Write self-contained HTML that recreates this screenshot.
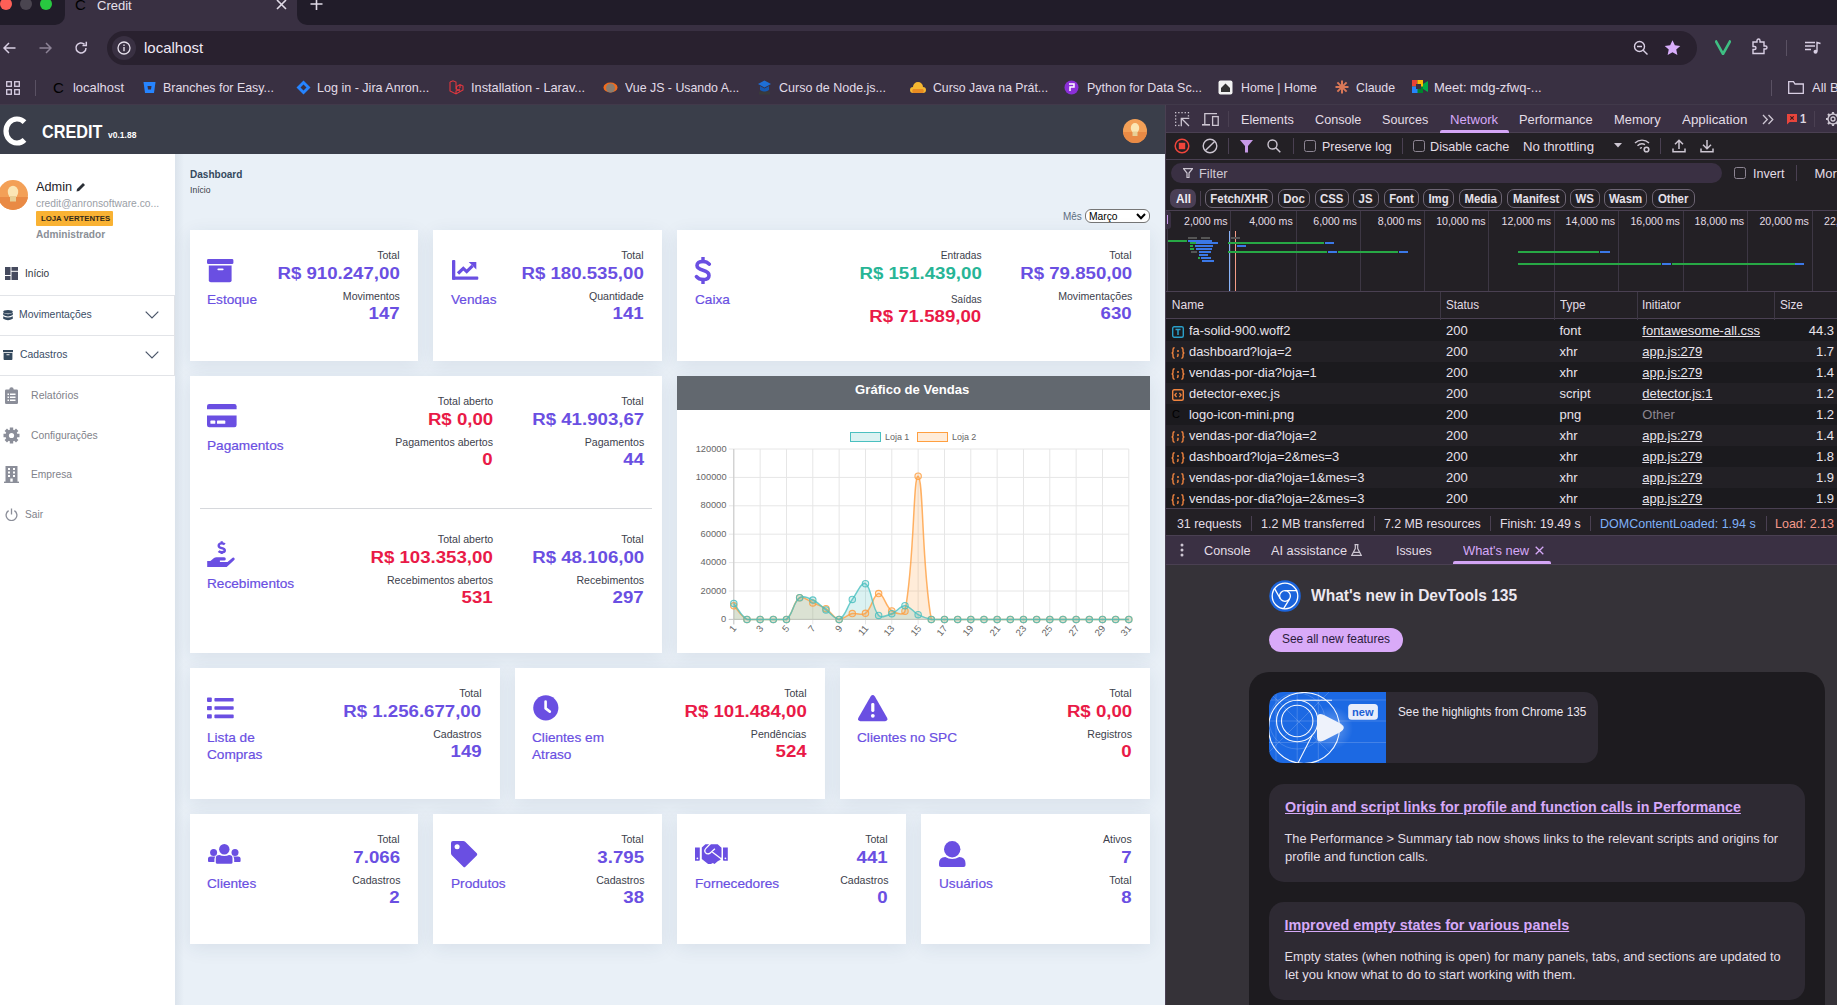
<!DOCTYPE html>
<html><head><meta charset="utf-8">
<style>
*{box-sizing:border-box;margin:0;padding:0}
html,body{width:1837px;height:1005px;overflow:hidden;background:#e9f0f7;font-family:"Liberation Sans",sans-serif}
.a{position:absolute}
.t{position:absolute;white-space:nowrap;line-height:1}
.r{text-align:right}
.card{position:absolute;background:#fff;box-shadow:0 4px 18px rgba(40,60,90,0.085)}
</style></head><body>
<div class="a" style="left:0;top:25px;width:1837px;height:80px;background:#393042"></div>
<!-- tab strip -->
<div class="a" style="left:0;top:0;width:1837px;height:25px;background:#211c29"></div>
<div class="a" style="left:54px;top:0;width:254px;height:25px;background:#393042"></div>
<div class="a" style="left:-20px;top:-20px;width:85px;height:45px;background:#211c29;border-bottom-right-radius:10px"></div>
<div class="a" style="left:297px;top:-20px;width:1600px;height:45px;background:#211c29;border-bottom-left-radius:10px"></div>
<div class="a" style="left:0;top:-2px;width:12px;height:12px;border-radius:50%;background:#fe5f57"></div>
<div class="a" style="left:20px;top:-2px;width:12px;height:12px;border-radius:50%;background:#4a4550"></div>
<div class="a" style="left:40px;top:-2px;width:12px;height:12px;border-radius:50%;background:#28c840"></div>
<div class="t" style="left:75px;top:-3px;font-size:15px;color:#000;font-weight:normal">C</div>
<div class="t" style="left:97px;top:-1px;font-size:13px;color:#e6e0ec">Credit</div>
<svg class="a" style="left:276px;top:0" width="11" height="10" viewBox="0 0 11 10"><path d="M1 0L10 9M10 0L1 9" stroke="#e0dae6" stroke-width="1.6"/></svg>
<svg class="a" style="left:310px;top:-2px" width="13" height="13" viewBox="0 0 13 13"><path d="M6.5 0V12M0.5 6H12.5" stroke="#e0dae6" stroke-width="1.6"/></svg>
<!-- toolbar -->
<svg class="a" style="left:3px;top:42px" width="13" height="12" viewBox="0 0 13 12"><path d="M6 1L1 6L6 11M1 6H12.5" stroke="#d9cfe4" stroke-width="1.5" fill="none"/></svg>
<svg class="a" style="left:39px;top:42px" width="13" height="12" viewBox="0 0 13 12"><path d="M7 1L12 6L7 11M12 6H0.5" stroke="#8d8396" stroke-width="1.5" fill="none"/></svg>
<svg class="a" style="left:74px;top:41px" width="14" height="14" viewBox="0 0 14 14"><path d="M12 7A5 5 0 1 1 10.5 3.4" stroke="#d9cfe4" stroke-width="1.5" fill="none"/><path d="M12.3 0.8V4.6H8.5" stroke="#d9cfe4" stroke-width="1.5" fill="none"/></svg>
<div class="a" style="left:107px;top:31px;width:1590px;height:34px;border-radius:17px;background:#29212f"></div>
<div class="a" style="left:112px;top:36px;width:24px;height:24px;border-radius:12px;background:#393042"></div>
<svg class="a" style="left:117px;top:41px" width="14" height="14" viewBox="0 0 14 14"><circle cx="7" cy="7" r="6" stroke="#e6e0ec" stroke-width="1.3" fill="none"/><rect x="6.3" y="6" width="1.4" height="4.2" fill="#e6e0ec"/><rect x="6.3" y="3.5" width="1.4" height="1.4" fill="#e6e0ec"/></svg>
<div class="t" style="left:144px;top:40px;font-size:15px;color:#efe9f5">localhost</div>
<svg class="a" style="left:1633px;top:40px" width="16" height="16" viewBox="0 0 16 16"><circle cx="6.5" cy="6.5" r="5" stroke="#d9cfe4" stroke-width="1.4" fill="none"/><path d="M4 6.5H9M10.2 10.2L14.5 14.5" stroke="#d9cfe4" stroke-width="1.4"/></svg>
<svg class="a" style="left:1664px;top:40px" width="17" height="16" viewBox="0 0 24 23"><path d="M12 0.5L15.4 7.6L23.2 8.5L17.4 13.8L19 21.5L12 17.6L5 21.5L6.6 13.8L0.8 8.5L8.6 7.6Z" fill="#d9aefc"/></svg>
<svg class="a" style="left:1715px;top:40px" width="16" height="15" viewBox="0 0 16 15"><path d="M0.5 0.5L8 14L15.5 0.5" stroke="#3fbf83" stroke-width="2.6" fill="none"/></svg>
<svg class="a" style="left:1751px;top:38px" width="18" height="18" viewBox="0 0 18 18"><path d="M2 4H6V2.5A1.5 1.5 0 0 1 9 2.5V4H13V8H14.5A1.5 1.5 0 0 1 14.5 11H13V15.5H2V11.5H3.5A1.5 1.5 0 0 0 3.5 8.5H2Z" stroke="#d9cfe4" stroke-width="1.4" fill="none"/></svg>
<div class="a" style="left:1786px;top:40px;width:1px;height:16px;background:#5a5163"></div>
<svg class="a" style="left:1805px;top:41px" width="16" height="14" viewBox="0 0 16 14"><path d="M0 1.5H10M0 5H10M0 8.5H6" stroke="#d9cfe4" stroke-width="1.4"/><path d="M12 10.5V1.5L15.5 2.5" stroke="#d9cfe4" stroke-width="1.4" fill="none"/><circle cx="10.5" cy="10.8" r="2" fill="#d9cfe4"/></svg>
<!-- bookmarks -->
<svg class="a" style="left:6px;top:81px" width="14" height="14" viewBox="0 0 14 14"><g fill="none" stroke="#d9cfe4" stroke-width="1.3"><rect x="0.7" y="0.7" width="4.6" height="4.6"/><rect x="8.7" y="0.7" width="4.6" height="4.6"/><rect x="0.7" y="8.7" width="4.6" height="4.6"/><rect x="8.7" y="8.7" width="4.6" height="4.6"/></g></svg>
<div class="a" style="left:35px;top:80px;width:1px;height:16px;background:#5a5163"></div>
<div class="t" style="left:53px;top:80px;font-size:15px;color:#000">C</div>
<div class="t" style="left:73px;top:81px;font-size:13px;color:#e2dce8;transform:scaleX(0.994);transform-origin:left center">localhost</div>
<svg class="a" style="left:143px;top:81px" width="13" height="13" viewBox="0 0 13 13"><path d="M0.5 1H12.5L11 12H2Z" fill="#2684ff"/><path d="M4.5 5H8.5L8 8.5H5Z" fill="#393042"/></svg>
<div class="t" style="left:163px;top:81px;font-size:13px;color:#e2dce8;transform:scaleX(0.956);transform-origin:left center">Branches for Easy...</div>
<svg class="a" style="left:296px;top:80px" width="15" height="15" viewBox="0 0 15 15"><path d="M7.5 0.5L14.5 7.5L7.5 14.5L0.5 7.5Z" fill="#2684ff"/><path d="M7.5 4.5L10.5 7.5L7.5 10.5L4.5 7.5Z" fill="#393042"/></svg>
<div class="t" style="left:317px;top:81px;font-size:13px;color:#e2dce8;transform:scaleX(0.965);transform-origin:left center">Log in - Jira Anron...</div>
<svg class="a" style="left:449px;top:80px" width="15" height="15" viewBox="0 0 15 15"><path d="M1 2L4 0.8L7 2V9L11 11M1 2V11L7 14L14 10V6L11 4.5L7.5 6.5V9M11 4.5V8M7 14V11L11 9" stroke="#e2373f" stroke-width="1.1" fill="none"/></svg>
<div class="t" style="left:471px;top:81px;font-size:13px;color:#e2dce8;transform:scaleX(0.982);transform-origin:left center">Installation - Larav...</div>
<svg class="a" style="left:603px;top:81px" width="15" height="13" viewBox="0 0 15 13"><ellipse cx="7.5" cy="6.5" rx="7" ry="5" fill="#f26b1d"/><ellipse cx="7.5" cy="7" rx="4.5" ry="4.5" fill="#8a7d70"/></svg>
<div class="t" style="left:625px;top:81px;font-size:13px;color:#e2dce8;transform:scaleX(0.951);transform-origin:left center">Vue JS - Usando A...</div>
<svg class="a" style="left:757px;top:80px" width="15" height="15" viewBox="0 0 15 15"><path d="M7.5 0.5L14 4L7.5 7.5L1 4Z" fill="#1e6fd6"/><path d="M3 6V10L7.5 12.5L12 10V6L7.5 8.5Z" fill="#1559b3"/><rect x="2" y="11.5" width="11" height="3" fill="#3a3a3a"/></svg>
<div class="t" style="left:779px;top:81px;font-size:13px;color:#e2dce8;transform:scaleX(0.962);transform-origin:left center">Curso de Node.js...</div>
<svg class="a" style="left:910px;top:81px" width="16" height="13" viewBox="0 0 16 13"><path d="M3 12A3 3 0 0 1 3 6A5 5 0 0 1 13 6A3 3 0 0 1 13 12Z" fill="#f5b731"/><path d="M3 12A3 3 0 0 1 3 8H13A3 3 0 0 1 13 12Z" fill="#e98b22"/></svg>
<div class="t" style="left:933px;top:81px;font-size:13px;color:#e2dce8;transform:scaleX(0.942);transform-origin:left center">Curso Java na Prát...</div>
<svg class="a" style="left:1064px;top:80px" width="15" height="15" viewBox="0 0 15 15"><circle cx="7.5" cy="7.5" r="7" fill="#8b2fd8"/><path d="M5 4H10V7H6V11" stroke="#fff" stroke-width="1.5" fill="none"/></svg>
<div class="t" style="left:1087px;top:81px;font-size:13px;color:#e2dce8;transform:scaleX(0.959);transform-origin:left center">Python for Data Sc...</div>
<svg class="a" style="left:1218px;top:80px" width="15" height="15" viewBox="0 0 15 15"><rect x="0.5" y="0.5" width="14" height="14" rx="2" fill="#f2f2f2"/><path d="M3 8L7.5 3.5L12 8V12H3Z" fill="#333"/></svg>
<div class="t" style="left:1241px;top:81px;font-size:13px;color:#e2dce8;transform:scaleX(0.95);transform-origin:left center">Home | Home</div>
<svg class="a" style="left:1335px;top:80px" width="14" height="14" viewBox="0 0 14 14"><g stroke="#d97757" stroke-width="2"><path d="M7 0.5V13.5M0.5 7H13.5M2.4 2.4L11.6 11.6M11.6 2.4L2.4 11.6"/></g></svg>
<div class="t" style="left:1356px;top:81px;font-size:13px;color:#e2dce8;transform:scaleX(0.947);transform-origin:left center">Claude</div>
<svg class="a" style="left:1412px;top:80px" width="16" height="13" viewBox="0 0 16 13"><path d="M0 3L3 0H11V13H3L0 10Z" fill="#00832d"/><rect x="0" y="0" width="5.5" height="6.5" fill="#ea4335"/><rect x="5.5" y="0" width="5.5" height="6.5" fill="#fbbc04"/><rect x="0" y="6.5" width="5.5" height="6.5" fill="#2684fc"/><rect x="4" y="4" width="5" height="5" fill="#393042"/><path d="M11 4L16 1V12L11 9Z" fill="#00ac47"/></svg>
<div class="t" style="left:1434px;top:81px;font-size:13px;color:#e2dce8;transform:scaleX(1.0);transform-origin:left center">Meet: mdg-zfwq-...</div>
<div class="a" style="left:1771px;top:80px;width:1px;height:16px;background:#5a5163"></div>
<svg class="a" style="left:1788px;top:81px" width="16" height="13" viewBox="0 0 16 13"><path d="M0.7 1V12.3H15.3V3H7L5.5 0.7H0.7Z" stroke="#d9cfe4" stroke-width="1.3" fill="none"/></svg>
<div class="t" style="left:1812px;top:81px;font-size:13px;color:#e2dce8">All B</div>

<div class="a" style="left:0;top:104px;width:1837px;height:1px;background:#41394a"></div>
<div class="a" style="left:0;top:105px;width:1165px;height:49px;background:#3a3e4a"></div>
<svg class="a" style="left:2px;top:115px" width="26" height="32" viewBox="0 0 26 32"><path d="M22.5 7.2A11 12 0 1 0 22.5 24.8" stroke="#fff" stroke-width="5.2" fill="none"/></svg>
<div class="t" style="left:42px;top:122.82px;font-size:18px;color:#fff;font-weight:bold;transform:scaleX(0.9);transform-origin:left center;">CREDIT</div>
<div class="t" style="left:108px;top:130.70px;font-size:8.5px;color:#fff;font-weight:bold;">v0.1.88</div>
<svg class="a" style="left:1123px;top:119px" width="24" height="24" viewBox="0 0 24 24"><defs><clipPath id="cav"><circle cx="12" cy="12" r="12"/></clipPath></defs><g clip-path="url(#cav)"><rect width="24" height="24" fill="#f3a057"/><rect y="13" width="24" height="11" fill="#e98a45"/><ellipse cx="12" cy="9" rx="4.2" ry="5" fill="#fbe6b4"/><rect x="9.5" y="12.5" width="5" height="4.5" fill="#e8cf95"/></g></svg>
<div class="a" style="left:0;top:154px;width:175px;height:851px;background:#fff"></div>
<div class="a" style="left:175px;top:154px;width:990px;height:851px;background:#e9f0f7"></div>
<div class="a" style="left:175px;top:154px;width:9px;height:851px;background:linear-gradient(90deg,rgba(40,60,90,0.07),rgba(40,60,90,0))"></div>
<svg class="a" style="left:-2px;top:180px" width="30" height="30" viewBox="0 0 30 30"><defs><clipPath id="cav2"><circle cx="15" cy="15" r="15"/></clipPath></defs><g clip-path="url(#cav2)"><rect width="30" height="30" fill="#f3a057"/><rect y="17" width="30" height="13" fill="#e98a45"/><ellipse cx="15" cy="12" rx="5.2" ry="6.2" fill="#fbe6b4"/><rect x="12" y="16" width="6" height="5.5" fill="#e8cf95"/></g></svg>
<div class="t" style="left:36px;top:181.28px;font-size:12.5px;color:#1e2228;transform:scaleX(1.02);transform-origin:left center;">Admin</div>
<svg class="a" style="left:76px;top:182px" width="10" height="10" viewBox="0 0 10 10"><path d="M0.5 9.5L1 7L7 1L9 3L3 9Z" fill="#2a2e36"/></svg>
<div class="t" style="left:36px;top:197.94px;font-size:10.5px;color:#9a9ea6;transform:scaleX(0.98);transform-origin:left center;">credit@anronsoftware.co...</div>
<div class="a" style="left:36px;top:211px;width:77px;height:15px;background:#f9b233;border-radius:1px"></div>
<div class="t" style="left:41px;top:214.64px;font-size:8px;color:#33291a;font-weight:bold;transform:scaleX(0.97);transform-origin:left center;">LOJA VERTENTES</div>
<div class="t" style="left:36px;top:229.20px;font-size:11px;color:#8b8f97;font-weight:bold;transform:scaleX(0.92);transform-origin:left center;">Administrador</div>
<svg class="a" style="left:5px;top:267px" width="13" height="13" viewBox="0 0 13 13"><g fill="#454a5e"><rect x="0" y="0" width="5.5" height="8"/><rect x="0" y="9" width="5.5" height="4"/><rect x="6.5" y="0" width="6.5" height="3.8"/><rect x="6.5" y="4.8" width="6.5" height="8.2"/></g></svg>
<div class="t" style="left:24.5px;top:268.00px;font-size:11px;color:#30343c;transform:scaleX(0.92);transform-origin:left center;">Início</div>
<div class="a" style="left:0;top:295px;width:175px;height:1px;background:#e2e4e8"></div>
<div class="a" style="left:0;top:335px;width:175px;height:1px;background:#e2e4e8"></div>
<div class="a" style="left:0;top:375px;width:175px;height:1px;background:#e2e4e8"></div>
<div class="a" style="left:174px;top:295px;width:1px;height:81px;background:#e2e4e8"></div>
<svg class="a" style="left:3px;top:310px" width="10" height="11" viewBox="0 0 10 11"><g fill="#34495e"><ellipse cx="5" cy="1.8" rx="4.8" ry="1.8"/><path d="M0.2 2.8Q5 5.6 9.8 2.8V5Q5 7.8 0.2 5Z"/><path d="M0.2 6.2Q5 9 9.8 6.2V8.8Q5 11.6 0.2 8.8Z"/></g></svg>
<div class="t" style="left:18.5px;top:309.24px;font-size:10.5px;color:#3a4d66;transform:scaleX(0.99);transform-origin:left center;">Movimentações</div>
<svg class="a" style="left:145px;top:311px" width="14" height="8" viewBox="0 0 14 8"><path d="M0.7 0.7L7 7L13.3 0.7" stroke="#4a5568" stroke-width="1.2" fill="none"/></svg>
<svg class="a" style="left:3px;top:350px" width="10" height="10" viewBox="0 0 10 10"><g fill="#34495e"><rect x="0" y="0" width="10" height="2.2"/><path d="M0.6 3H9.4V9.2Q9.4 10 8.6 10H1.4Q0.6 10 0.6 9.2Z"/></g><rect x="3.5" y="4.3" width="3" height="0.9" fill="#fff"/></svg>
<div class="t" style="left:19.7px;top:349.44px;font-size:10.5px;color:#3a4d66;transform:scaleX(0.99);transform-origin:left center;">Cadastros</div>
<svg class="a" style="left:145px;top:351px" width="14" height="8" viewBox="0 0 14 8"><path d="M0.7 0.7L7 7L13.3 0.7" stroke="#4a5568" stroke-width="1.2" fill="none"/></svg>
<svg class="a" style="left:5px;top:387px" width="13" height="17" viewBox="0 0 13 17"><path d="M1.3 2.5H4.3A2.2 2.2 0 0 1 8.7 2.5H11.7Q13 2.5 13 3.8V15.7Q13 17 11.7 17H1.3Q0 17 0 15.7V3.8Q0 2.5 1.3 2.5Z" fill="#8b8e99"/><g fill="#fff"><rect x="2.5" y="6.5" width="1.5" height="1.5"/><rect x="5" y="6.5" width="5.5" height="1.5"/><rect x="2.5" y="9.5" width="1.5" height="1.5"/><rect x="5" y="9.5" width="5.5" height="1.5"/><rect x="2.5" y="12.5" width="1.5" height="1.5"/><rect x="5" y="12.5" width="5.5" height="1.5"/></g></svg>
<div class="t" style="left:30.6px;top:389.90px;font-size:11px;color:#7f828a;transform:scaleX(0.96);transform-origin:left center;">Relatórios</div>
<svg class="a" style="left:3px;top:427px" width="17" height="17" viewBox="0 0 17 17"><g fill="#8b8e99"><circle cx="8.5" cy="8.5" r="6"/><g stroke="#8b8e99" stroke-width="3.4"><path d="M8.5 0.5V16.5M0.5 8.5H16.5M2.8 2.8L14.2 14.2M14.2 2.8L2.8 14.2"/></g></g><circle cx="8.5" cy="8.5" r="2.6" fill="#fff"/></svg>
<div class="t" style="left:30.6px;top:430.00px;font-size:11px;color:#7f828a;transform:scaleX(0.94);transform-origin:left center;">Configurações</div>
<svg class="a" style="left:4px;top:466px" width="15" height="17" viewBox="0 0 15 17"><rect x="1.5" y="0" width="12" height="17" fill="#8b8e99"/><rect x="0" y="15.6" width="15" height="1.4" fill="#8b8e99"/><g fill="#fff"><rect x="4" y="2" width="2" height="2"/><rect x="9" y="2" width="2" height="2"/><rect x="4" y="5.5" width="2" height="2"/><rect x="9" y="5.5" width="2" height="2"/><rect x="4" y="9" width="2" height="2"/><rect x="9" y="9" width="2" height="2"/><rect x="6.3" y="12.5" width="2.4" height="3.2"/></g></svg>
<div class="t" style="left:30.6px;top:469.00px;font-size:11px;color:#7f828a;transform:scaleX(0.93);transform-origin:left center;">Empresa</div>
<svg class="a" style="left:5px;top:508px" width="13" height="13" viewBox="0 0 13 13"><path d="M3.6 2.6A5.4 5.4 0 1 0 9.4 2.6" stroke="#8b8e99" stroke-width="1.3" fill="none"/><path d="M6.5 0.5V6.5" stroke="#8b8e99" stroke-width="1.3"/></svg>
<div class="t" style="left:24.6px;top:509.20px;font-size:11px;color:#7f828a;transform:scaleX(0.92);transform-origin:left center;">Sair</div>
<div class="t" style="left:190px;top:168.94px;font-size:10.5px;color:#34495e;font-weight:bold;transform:scaleX(0.955);transform-origin:left center;">Dashboard</div>
<div class="t" style="left:190px;top:185.96px;font-size:9px;color:#3a3e46;transform:scaleX(0.95);transform-origin:left center;">Início</div>
<div class="t" style="left:1063px;top:210.94px;font-size:10.5px;color:#5d6e80;transform:scaleX(0.95);transform-origin:left center;">Mês</div>
<div class="a" style="left:1085px;top:209px;width:65px;height:14px;background:#fff;border:1px solid #767676;border-radius:6px"></div>
<div class="t" style="left:1089px;top:210.94px;font-size:10.5px;color:#000;transform:scaleX(0.98);transform-origin:left center;">Março</div>
<svg class="a" style="left:1136px;top:213px" width="10" height="7" viewBox="0 0 10 7"><path d="M1 1L5 5.3L9 1" stroke="#000" stroke-width="2" fill="none"/></svg>
<div class="card" style="left:190px;top:230px;width:228px;height:131px"></div>
<div class="card" style="left:433px;top:230px;width:229px;height:131px"></div>
<div class="card" style="left:677px;top:230px;width:473px;height:131px"></div>
<svg class="a" style="left:207.4px;top:258.6px" width="27" height="24" viewBox="0 0 27 24"><rect x="0" y="0" width="26.4" height="5.1" rx="1.4" fill="#6a4fe2"/><path d="M1.8 6.6H24.6V21.2Q24.6 23.2 22.6 23.2H3.8Q1.8 23.2 1.8 21.2Z" fill="#6a4fe2"/><rect x="10.4" y="9.4" width="6.2" height="1.8" rx="0.9" fill="#fff"/></svg>
<div class="t" style="left:207px;top:292.79px;font-size:13.5px;color:#6a4fe2;transform:scaleX(1.01);transform-origin:left center;-webkit-text-stroke:0.2px #6a4fe2;">Estoque</div>
<div class="t" style="right:1437px;top:251.38px;font-size:10.2px;color:#3d414c;transform:scaleX(1.04);transform-origin:right center;">Total</div>
<div class="t" style="right:1437px;top:264.81px;font-size:17.2px;color:#6a4fe2;font-weight:bold;transform:scaleX(1.085);transform-origin:right center;">R$ 910.247,00</div>
<div class="t" style="right:1437px;top:292.38px;font-size:10.2px;color:#3d414c;transform:scaleX(1.04);transform-origin:right center;">Movimentos</div>
<div class="t" style="right:1437px;top:304.61px;font-size:17.2px;color:#6a4fe2;font-weight:bold;transform:scaleX(1.085);transform-origin:right center;">147</div>
<svg class="a" style="left:451.5px;top:260.2px" width="27" height="20" viewBox="0 0 27 20"><rect x="0" y="0" width="3.3" height="19.8" rx="1" fill="#6a4fe2"/><rect x="0" y="16.6" width="26.3" height="3.2" rx="1" fill="#6a4fe2"/><path d="M6 13.5L11.3 8.4L14.7 11.6L20.5 5.8" stroke="#6a4fe2" stroke-width="3.2" fill="none" stroke-linejoin="miter"/><path d="M16.7 2H24.3V9.6Z" fill="#6a4fe2"/></svg>
<div class="t" style="left:451px;top:292.79px;font-size:13.5px;color:#6a4fe2;transform:scaleX(1.01);transform-origin:left center;-webkit-text-stroke:0.2px #6a4fe2;">Vendas</div>
<div class="t" style="right:1193px;top:251.38px;font-size:10.2px;color:#3d414c;transform:scaleX(1.04);transform-origin:right center;">Total</div>
<div class="t" style="right:1193px;top:264.81px;font-size:17.2px;color:#6a4fe2;font-weight:bold;transform:scaleX(1.085);transform-origin:right center;">R$ 180.535,00</div>
<div class="t" style="right:1193px;top:292.38px;font-size:10.2px;color:#3d414c;transform:scaleX(1.04);transform-origin:right center;">Quantidade</div>
<div class="t" style="right:1193px;top:304.61px;font-size:17.2px;color:#6a4fe2;font-weight:bold;transform:scaleX(1.085);transform-origin:right center;">141</div>
<svg class="a" style="left:693.5px;top:257px" width="18" height="27" viewBox="0 0 18 27"><path d="M9 0.5V4.5M9 22.5V26.5" stroke="#6a4fe2" stroke-width="3.4" stroke-linecap="round"/><path d="M15.2 7.2Q13 4.5 9 4.5Q3 4.5 3 8.6Q3 11.6 9 13.3Q15 15 15 18.4Q15 22.5 9 22.5Q4.8 22.5 2.5 19.6" stroke="#6a4fe2" stroke-width="3.6" fill="none" stroke-linecap="round"/></svg>
<div class="t" style="left:695px;top:292.79px;font-size:13.5px;color:#6a4fe2;transform:scaleX(1.01);transform-origin:left center;-webkit-text-stroke:0.2px #6a4fe2;">Caixa</div>
<div class="t" style="right:855.5px;top:251.38px;font-size:10.2px;color:#3d414c;">Entradas</div>
<div class="t" style="right:855.5px;top:264.81px;font-size:17.2px;color:#27b596;font-weight:bold;transform:scaleX(1.085);transform-origin:right center;">R$ 151.439,00</div>
<div class="t" style="right:855.5px;top:295.38px;font-size:10.2px;color:#3d414c;transform:scaleX(0.97);transform-origin:right center;">Saídas</div>
<div class="t" style="right:855.5px;top:307.61px;font-size:17.2px;color:#e91a47;font-weight:bold;transform:scaleX(1.085);transform-origin:right center;">R$ 71.589,00</div>
<div class="t" style="right:705px;top:251.38px;font-size:10.2px;color:#3d414c;transform:scaleX(1.04);transform-origin:right center;">Total</div>
<div class="t" style="right:705px;top:264.81px;font-size:17.2px;color:#6a4fe2;font-weight:bold;transform:scaleX(1.085);transform-origin:right center;">R$ 79.850,00</div>
<div class="t" style="right:705px;top:292.38px;font-size:10.2px;color:#3d414c;transform:scaleX(1.04);transform-origin:right center;">Movimentações</div>
<div class="t" style="right:705px;top:304.61px;font-size:17.2px;color:#6a4fe2;font-weight:bold;transform:scaleX(1.085);transform-origin:right center;">630</div>
<div class="card" style="left:190px;top:376px;width:472px;height:277px"></div>
<div class="card" style="left:677px;top:376px;width:473px;height:277px"></div>
<div class="a" style="left:200px;top:508px;width:452px;height:1px;background:#d6d8dc"></div>
<svg class="a" style="left:207.4px;top:404.4px" width="30" height="24" viewBox="0 0 30 24"><path d="M0 2.2Q0 0 2.2 0H27.4Q29.6 0 29.6 2.2V5.3H0Z" fill="#6a4fe2"/><path d="M0 11.5H29.6V21Q29.6 23.2 27.4 23.2H2.2Q0 23.2 0 21Z" fill="#6a4fe2"/><rect x="3.4" y="16.6" width="4.9" height="3.2" rx="0.6" fill="#fff"/><rect x="10" y="16.6" width="8.3" height="3.2" rx="0.6" fill="#fff"/></svg>
<div class="t" style="left:207px;top:438.79px;font-size:13.5px;color:#6a4fe2;transform:scaleX(1.01);transform-origin:left center;-webkit-text-stroke:0.2px #6a4fe2;">Pagamentos</div>
<div class="t" style="right:1344px;top:397.38px;font-size:10.2px;color:#3d414c;transform:scaleX(1.04);transform-origin:right center;">Total aberto</div>
<div class="t" style="right:1344px;top:410.81px;font-size:17.2px;color:#e91a47;font-weight:bold;transform:scaleX(1.085);transform-origin:right center;">R$ 0,00</div>
<div class="t" style="right:1344px;top:438.38px;font-size:10.2px;color:#3d414c;transform:scaleX(1.04);transform-origin:right center;">Pagamentos abertos</div>
<div class="t" style="right:1344px;top:450.61px;font-size:17.2px;color:#e91a47;font-weight:bold;transform:scaleX(1.085);transform-origin:right center;">0</div>
<div class="t" style="right:1193px;top:397.38px;font-size:10.2px;color:#3d414c;transform:scaleX(1.04);transform-origin:right center;">Total</div>
<div class="t" style="right:1193px;top:410.81px;font-size:17.2px;color:#6a4fe2;font-weight:bold;transform:scaleX(1.085);transform-origin:right center;">R$ 41.903,67</div>
<div class="t" style="right:1193px;top:438.38px;font-size:10.2px;color:#3d414c;transform:scaleX(1.04);transform-origin:right center;">Pagamentos</div>
<div class="t" style="right:1193px;top:450.61px;font-size:17.2px;color:#6a4fe2;font-weight:bold;transform:scaleX(1.085);transform-origin:right center;">44</div>
<svg class="a" style="left:207.4px;top:541px" width="28" height="27" viewBox="0 0 28 27"><path d="M14.7 0.3V2.4M14.7 11.1V13" stroke="#6a4fe2" stroke-width="2.2"/><path d="M17.8 3.4Q16.8 2.4 14.6 2.4Q11.7 2.4 11.7 4.7Q11.7 6.3 14.8 7.1Q17.8 7.9 17.8 9.2Q17.8 11.2 14.8 11.2Q12.6 11.2 11.6 10.1" stroke="#6a4fe2" stroke-width="2.4" fill="none" stroke-linecap="butt"/><path d="M0.2 19.9H3.4L7 16.9Q8 16.3 9.5 16.3H17.2Q18.8 16.3 18.8 18Q18.8 19.6 17.2 19.6H13Q12.6 20.1 13 21H20.5L25.6 16.8Q26.9 16.1 27.6 17.5Q28 18.5 27 19.2L19.7 25.9H0.2Z" fill="#6a4fe2"/></svg>
<div class="t" style="left:207px;top:576.79px;font-size:13.5px;color:#6a4fe2;transform:scaleX(1.01);transform-origin:left center;-webkit-text-stroke:0.2px #6a4fe2;">Recebimentos</div>
<div class="t" style="right:1344px;top:535.38px;font-size:10.2px;color:#3d414c;transform:scaleX(1.04);transform-origin:right center;">Total aberto</div>
<div class="t" style="right:1344px;top:548.81px;font-size:17.2px;color:#e91a47;font-weight:bold;transform:scaleX(1.085);transform-origin:right center;">R$ 103.353,00</div>
<div class="t" style="right:1344px;top:576.38px;font-size:10.2px;color:#3d414c;transform:scaleX(1.04);transform-origin:right center;">Recebimentos abertos</div>
<div class="t" style="right:1344px;top:588.61px;font-size:17.2px;color:#e91a47;font-weight:bold;transform:scaleX(1.085);transform-origin:right center;">531</div>
<div class="t" style="right:1193px;top:535.38px;font-size:10.2px;color:#3d414c;transform:scaleX(1.04);transform-origin:right center;">Total</div>
<div class="t" style="right:1193px;top:548.81px;font-size:17.2px;color:#6a4fe2;font-weight:bold;transform:scaleX(1.085);transform-origin:right center;">R$ 48.106,00</div>
<div class="t" style="right:1193px;top:576.38px;font-size:10.2px;color:#3d414c;transform:scaleX(1.04);transform-origin:right center;">Recebimentos</div>
<div class="t" style="right:1193px;top:588.61px;font-size:17.2px;color:#6a4fe2;font-weight:bold;transform:scaleX(1.085);transform-origin:right center;">297</div>
<div class="card" style="left:190px;top:668px;width:310px;height:131px"></div>
<div class="card" style="left:515px;top:668px;width:310px;height:131px"></div>
<div class="card" style="left:840px;top:668px;width:310px;height:131px"></div>
<svg class="a" style="left:207.2px;top:697.4px" width="27" height="22" viewBox="0 0 27 22"><g fill="#6a4fe2"><rect x="0" y="0.6" width="4.8" height="4.3" rx="0.8"/><rect x="7.4" y="0.9" width="19.3" height="3.6" rx="0.8"/><rect x="0" y="8.9" width="4.8" height="4.3" rx="0.8"/><rect x="7.4" y="9.2" width="19.3" height="3.6" rx="0.8"/><rect x="0" y="17.3" width="4.8" height="4.3" rx="0.8"/><rect x="7.4" y="17.6" width="19.3" height="3.6" rx="0.8"/></g></svg>
<div class="t" style="left:207px;top:731.29px;font-size:13.5px;color:#6a4fe2;transform:scaleX(1.01);transform-origin:left center;-webkit-text-stroke:0.2px #6a4fe2;">Lista de</div>
<div class="t" style="left:207px;top:748.19px;font-size:13.5px;color:#6a4fe2;transform:scaleX(1.01);transform-origin:left center;-webkit-text-stroke:0.2px #6a4fe2;">Compras</div>
<div class="t" style="right:1355.5px;top:689.38px;font-size:10.2px;color:#3d414c;transform:scaleX(1.04);transform-origin:right center;">Total</div>
<div class="t" style="right:1355.5px;top:702.81px;font-size:17.2px;color:#6a4fe2;font-weight:bold;transform:scaleX(1.085);transform-origin:right center;">R$ 1.256.677,00</div>
<div class="t" style="right:1355.5px;top:730.38px;font-size:10.2px;color:#3d414c;transform:scaleX(1.04);transform-origin:right center;">Cadastros</div>
<div class="t" style="right:1355.5px;top:742.61px;font-size:17.2px;color:#6a4fe2;font-weight:bold;transform:scaleX(1.085);transform-origin:right center;">149</div>
<svg class="a" style="left:532.5px;top:695.3px" width="26" height="26" viewBox="0 0 26 26"><circle cx="12.8" cy="12.8" r="12.6" fill="#6a4fe2"/><path d="M12.6 6.5V13.4L16.8 16.6" stroke="#fff" stroke-width="2.6" fill="none" stroke-linecap="round" stroke-linejoin="round"/></svg>
<div class="t" style="left:532px;top:731.29px;font-size:13.5px;color:#6a4fe2;transform:scaleX(1.01);transform-origin:left center;-webkit-text-stroke:0.2px #6a4fe2;">Clientes em</div>
<div class="t" style="left:532px;top:748.19px;font-size:13.5px;color:#6a4fe2;transform:scaleX(1.01);transform-origin:left center;-webkit-text-stroke:0.2px #6a4fe2;">Atraso</div>
<div class="t" style="right:1030.5px;top:689.38px;font-size:10.2px;color:#3d414c;transform:scaleX(1.04);transform-origin:right center;">Total</div>
<div class="t" style="right:1030.5px;top:702.81px;font-size:17.2px;color:#e91a47;font-weight:bold;transform:scaleX(1.085);transform-origin:right center;">R$ 101.484,00</div>
<div class="t" style="right:1030.5px;top:730.38px;font-size:10.2px;color:#3d414c;transform:scaleX(1.04);transform-origin:right center;">Pendências</div>
<div class="t" style="right:1030.5px;top:742.61px;font-size:17.2px;color:#e91a47;font-weight:bold;transform:scaleX(1.085);transform-origin:right center;">524</div>
<svg class="a" style="left:857.5px;top:695px" width="30" height="27" viewBox="0 0 30 27"><path d="M12.6 1.4Q14.7 -1.2 16.9 1.4L29.1 22.8Q30.2 25.8 27.2 26.2H2.3Q-0.8 25.8 0.4 22.8Z" fill="#6a4fe2"/><rect x="13.2" y="8" width="3.2" height="9" rx="1.4" fill="#fff"/><circle cx="14.8" cy="20.8" r="1.9" fill="#fff"/></svg>
<div class="t" style="left:857px;top:730.79px;font-size:13.5px;color:#6a4fe2;transform:scaleX(1.01);transform-origin:left center;-webkit-text-stroke:0.2px #6a4fe2;">Clientes no SPC</div>
<div class="t" style="right:705.2px;top:689.38px;font-size:10.2px;color:#3d414c;transform:scaleX(1.04);transform-origin:right center;">Total</div>
<div class="t" style="right:705.2px;top:702.81px;font-size:17.2px;color:#e91a47;font-weight:bold;transform:scaleX(1.085);transform-origin:right center;">R$ 0,00</div>
<div class="t" style="right:705.2px;top:730.38px;font-size:10.2px;color:#3d414c;transform:scaleX(1.04);transform-origin:right center;">Registros</div>
<div class="t" style="right:705.2px;top:742.61px;font-size:17.2px;color:#e91a47;font-weight:bold;transform:scaleX(1.085);transform-origin:right center;">0</div>
<div class="card" style="left:190px;top:814px;width:228px;height:130px"></div>
<div class="card" style="left:433px;top:814px;width:229px;height:130px"></div>
<div class="card" style="left:677px;top:814px;width:229px;height:130px"></div>
<div class="card" style="left:921px;top:814px;width:229px;height:130px"></div>
<svg class="a" style="left:207.6px;top:844.2px" width="33" height="20" viewBox="0 0 33 20"><g fill="#6a4fe2"><circle cx="16.3" cy="5.3" r="5.2"/><path d="M7.8 14.2Q7.8 10.9 11.5 10.9Q13.5 12 16.3 12Q19.1 12 21 10.9Q24.5 10.9 24.5 14.2V18.6Q24.5 19.7 23.4 19.7H8.9Q7.8 19.7 7.8 18.6Z"/><circle cx="5.6" cy="8.6" r="3.5"/><path d="M0 14.5Q0 12.5 2.5 12.5H7.4Q6.4 13.6 6.4 15.5V17.9H1Q0 17.9 0 16.9Z"/><circle cx="27" cy="8.6" r="3.5"/><path d="M32.6 14.5Q32.6 12.5 30.1 12.5H25.2Q26.2 13.6 26.2 15.5V17.9H31.6Q32.6 17.9 32.6 16.9Z"/></g></svg>
<div class="t" style="left:207px;top:876.79px;font-size:13.5px;color:#6a4fe2;transform:scaleX(1.01);transform-origin:left center;-webkit-text-stroke:0.2px #6a4fe2;">Clientes</div>
<div class="t" style="right:1437px;top:835.38px;font-size:10.2px;color:#3d414c;transform:scaleX(1.04);transform-origin:right center;">Total</div>
<div class="t" style="right:1437px;top:848.81px;font-size:17.2px;color:#6a4fe2;font-weight:bold;transform:scaleX(1.085);transform-origin:right center;">7.066</div>
<div class="t" style="right:1437px;top:876.38px;font-size:10.2px;color:#3d414c;transform:scaleX(1.04);transform-origin:right center;">Cadastros</div>
<div class="t" style="right:1437px;top:888.61px;font-size:17.2px;color:#6a4fe2;font-weight:bold;transform:scaleX(1.085);transform-origin:right center;">2</div>
<svg class="a" style="left:451.3px;top:840.9px" width="27" height="27" viewBox="0 0 27 27"><path d="M0 2Q0 0 2 0H12.2Q13.4 0 14.2 0.8L25.8 12.2Q26.8 13.3 25.8 14.4L14.4 25.8Q13.4 26.8 12.3 25.8L0.8 14.2Q0 13.4 0 12.2Z" fill="#6a4fe2"/><circle cx="6.1" cy="5.8" r="2.5" fill="#fff"/></svg>
<div class="t" style="left:451px;top:876.79px;font-size:13.5px;color:#6a4fe2;transform:scaleX(1.01);transform-origin:left center;-webkit-text-stroke:0.2px #6a4fe2;">Produtos</div>
<div class="t" style="right:1193px;top:835.38px;font-size:10.2px;color:#3d414c;transform:scaleX(1.04);transform-origin:right center;">Total</div>
<div class="t" style="right:1193px;top:848.81px;font-size:17.2px;color:#6a4fe2;font-weight:bold;transform:scaleX(1.085);transform-origin:right center;">3.795</div>
<div class="t" style="right:1193px;top:876.38px;font-size:10.2px;color:#3d414c;transform:scaleX(1.04);transform-origin:right center;">Cadastros</div>
<div class="t" style="right:1193px;top:888.61px;font-size:17.2px;color:#6a4fe2;font-weight:bold;transform:scaleX(1.085);transform-origin:right center;">38</div>
<svg class="a" style="left:695.2px;top:844px" width="33" height="20" viewBox="0 0 33 20"><g fill="#6a4fe2"><path d="M0 3.4H4.8V15.8Q4.8 16.7 3.9 16.7H0Z"/><path d="M32.8 3.4H28V15.8Q28 16.7 28.9 16.7H32.8Z"/><path d="M6.8 3.4L10.4 0.2H22.7L26.5 3.8V13L25.5 15.7L22.7 17.3L19.5 19.9L17.9 18.9L15.9 19.9H13.1L6.8 14.9Z"/></g><g fill="#fff"><circle cx="2.4" cy="14.3" r="0.9"/><circle cx="30.4" cy="14.3" r="0.9"/></g><path d="M15.6 -0.5L10.9 4.4Q8.9 6.6 10.4 8.6Q12.2 10.7 14.7 9.4L19.9 4.8" stroke="#fff" stroke-width="1.3" fill="none"/><path d="M17.2 8L26.5 15" stroke="#fff" stroke-width="1.3" fill="none"/></svg>
<div class="t" style="left:695px;top:876.79px;font-size:13.5px;color:#6a4fe2;transform:scaleX(1.01);transform-origin:left center;-webkit-text-stroke:0.2px #6a4fe2;">Fornecedores</div>
<div class="t" style="right:949px;top:835.38px;font-size:10.2px;color:#3d414c;transform:scaleX(1.04);transform-origin:right center;">Total</div>
<div class="t" style="right:949px;top:848.81px;font-size:17.2px;color:#6a4fe2;font-weight:bold;transform:scaleX(1.085);transform-origin:right center;">441</div>
<div class="t" style="right:949px;top:876.38px;font-size:10.2px;color:#3d414c;transform:scaleX(1.04);transform-origin:right center;">Cadastros</div>
<div class="t" style="right:949px;top:888.61px;font-size:17.2px;color:#6a4fe2;font-weight:bold;transform:scaleX(1.085);transform-origin:right center;">0</div>
<svg class="a" style="left:939.2px;top:840.9px" width="27" height="27" viewBox="0 0 27 27"><g fill="#6a4fe2"><circle cx="13.2" cy="8.2" r="8.2"/><path d="M0 22.3Q0 16.4 6.3 16Q9.5 17.9 13.2 17.9Q17 17.9 20.2 16Q26.5 16.4 26.5 22.3V24.3Q26.5 26.1 24.6 26.1H1.9Q0 26.1 0 24.3Z"/></g></svg>
<div class="t" style="left:939px;top:876.79px;font-size:13.5px;color:#6a4fe2;transform:scaleX(1.01);transform-origin:left center;-webkit-text-stroke:0.2px #6a4fe2;">Usuários</div>
<div class="t" style="right:705px;top:835.38px;font-size:10.2px;color:#3d414c;transform:scaleX(1.04);transform-origin:right center;">Ativos</div>
<div class="t" style="right:705px;top:848.81px;font-size:17.2px;color:#6a4fe2;font-weight:bold;transform:scaleX(1.085);transform-origin:right center;">7</div>
<div class="t" style="right:705px;top:876.38px;font-size:10.2px;color:#3d414c;transform:scaleX(1.04);transform-origin:right center;">Total</div>
<div class="t" style="right:705px;top:888.61px;font-size:17.2px;color:#6a4fe2;font-weight:bold;transform:scaleX(1.085);transform-origin:right center;">8</div>
<div class="a" style="left:677px;top:376px;width:473px;height:34px;background:#62686f"></div>
<div class="t" style="left:913.5px;top:382.99px;font-size:13.5px;color:#fff;font-weight:bold;transform:scaleX(0.97);transform-origin:left center;transform:translateX(-50%) scaleX(0.97);">Gráfico de Vendas</div>
<svg class="a" style="left:0;top:0" width="1837" height="1005" viewBox="0 0 1837 1005"><line x1="728.8" y1="619.40" x2="1128.81" y2="619.40" stroke="#e6e6e6" stroke-width="1"/><line x1="728.8" y1="591.00" x2="1128.81" y2="591.00" stroke="#e6e6e6" stroke-width="1"/><line x1="728.8" y1="562.60" x2="1128.81" y2="562.60" stroke="#e6e6e6" stroke-width="1"/><line x1="728.8" y1="534.20" x2="1128.81" y2="534.20" stroke="#e6e6e6" stroke-width="1"/><line x1="728.8" y1="505.80" x2="1128.81" y2="505.80" stroke="#e6e6e6" stroke-width="1"/><line x1="728.8" y1="477.40" x2="1128.81" y2="477.40" stroke="#e6e6e6" stroke-width="1"/><line x1="728.8" y1="449.00" x2="1128.81" y2="449.00" stroke="#e6e6e6" stroke-width="1"/><line x1="733.80" y1="449.0" x2="733.80" y2="624.4" stroke="#e6e6e6" stroke-width="1"/><line x1="760.13" y1="449.0" x2="760.13" y2="624.4" stroke="#e6e6e6" stroke-width="1"/><line x1="786.47" y1="449.0" x2="786.47" y2="624.4" stroke="#e6e6e6" stroke-width="1"/><line x1="812.80" y1="449.0" x2="812.80" y2="624.4" stroke="#e6e6e6" stroke-width="1"/><line x1="839.14" y1="449.0" x2="839.14" y2="624.4" stroke="#e6e6e6" stroke-width="1"/><line x1="865.47" y1="449.0" x2="865.47" y2="624.4" stroke="#e6e6e6" stroke-width="1"/><line x1="891.80" y1="449.0" x2="891.80" y2="624.4" stroke="#e6e6e6" stroke-width="1"/><line x1="918.14" y1="449.0" x2="918.14" y2="624.4" stroke="#e6e6e6" stroke-width="1"/><line x1="944.47" y1="449.0" x2="944.47" y2="624.4" stroke="#e6e6e6" stroke-width="1"/><line x1="970.81" y1="449.0" x2="970.81" y2="624.4" stroke="#e6e6e6" stroke-width="1"/><line x1="997.14" y1="449.0" x2="997.14" y2="624.4" stroke="#e6e6e6" stroke-width="1"/><line x1="1023.47" y1="449.0" x2="1023.47" y2="624.4" stroke="#e6e6e6" stroke-width="1"/><line x1="1049.81" y1="449.0" x2="1049.81" y2="624.4" stroke="#e6e6e6" stroke-width="1"/><line x1="1076.14" y1="449.0" x2="1076.14" y2="624.4" stroke="#e6e6e6" stroke-width="1"/><line x1="1102.48" y1="449.0" x2="1102.48" y2="624.4" stroke="#e6e6e6" stroke-width="1"/><line x1="1128.81" y1="449.0" x2="1128.81" y2="624.4" stroke="#e6e6e6" stroke-width="1"/><line x1="733.80" y1="449.0" x2="733.80" y2="624.4" stroke="#c8c8c8" stroke-width="1"/><line x1="728.8" y1="619.4" x2="1128.81" y2="619.4" stroke="#c8c8c8" stroke-width="1"/><path d="M733.80 605.82C739.07 611.25 740.76 616.20 746.97 619.40C751.29 619.40 754.87 619.40 760.13 619.40C765.40 619.40 768.03 619.40 773.30 619.40C778.57 619.40 782.87 619.40 786.47 619.40C793.40 613.69 792.88 601.96 799.63 597.73C803.41 595.37 807.58 600.75 812.80 602.93C818.11 605.14 821.14 605.68 825.97 608.71C831.67 612.27 833.44 618.35 839.14 619.40C843.97 619.40 846.80 614.84 852.30 613.58C857.34 612.42 861.72 616.22 865.47 613.37C872.25 608.21 873.14 594.08 878.64 593.56C883.67 593.08 885.24 606.49 891.80 610.88C895.78 613.54 904.04 615.93 904.97 611.16C914.57 562.09 913.03 474.67 918.14 476.26C923.56 477.96 921.66 566.95 931.30 619.40C932.19 619.40 939.21 619.40 944.47 619.40C949.74 619.40 952.37 619.40 957.64 619.40C962.91 619.40 965.54 619.40 970.81 619.40C976.07 619.40 978.71 619.40 983.97 619.40C989.24 619.40 991.87 619.40 997.14 619.40C1002.41 619.40 1005.04 619.40 1010.31 619.40C1015.57 619.40 1018.21 619.40 1023.47 619.40C1028.74 619.40 1031.37 619.40 1036.64 619.40C1041.91 619.40 1044.54 619.40 1049.81 619.40C1055.07 619.40 1057.71 619.40 1062.97 619.40C1068.24 619.40 1070.88 619.40 1076.14 619.40C1081.41 619.40 1084.04 619.40 1089.31 619.40C1094.58 619.40 1097.21 619.40 1102.48 619.40C1107.74 619.40 1110.38 619.40 1115.64 619.40C1120.91 619.40 1123.54 619.40 1128.81 619.40L1128.81 619.4L733.80 619.4Z" fill="rgba(255,159,64,0.2)"/><path d="M733.80 603.51C739.07 609.87 740.54 615.52 746.97 619.40C751.07 619.40 754.87 619.40 760.13 619.40C765.40 619.40 768.03 619.40 773.30 619.40C778.57 619.40 782.87 619.40 786.47 619.40C793.40 613.69 792.74 602.80 799.63 597.73C803.27 595.06 808.08 597.86 812.80 600.05C818.61 602.73 820.67 605.99 825.97 609.89C831.20 613.73 834.88 619.40 839.14 619.40C845.41 616.89 846.62 607.08 852.30 599.38C857.16 592.79 861.54 581.29 865.47 583.69C872.07 587.71 871.04 606.76 878.64 615.42C881.57 618.77 886.94 615.53 891.80 613.72C897.47 611.61 899.80 605.43 904.97 605.63C910.33 605.83 912.52 611.77 918.14 614.71C923.05 617.28 925.88 618.43 931.30 619.40C936.41 619.40 939.21 619.40 944.47 619.40C949.74 619.40 952.37 619.40 957.64 619.40C962.91 619.40 965.54 619.40 970.81 619.40C976.07 619.40 978.71 619.40 983.97 619.40C989.24 619.40 991.87 619.40 997.14 619.40C1002.41 619.40 1005.04 619.40 1010.31 619.40C1015.57 619.40 1018.21 619.40 1023.47 619.40C1028.74 619.40 1031.37 619.40 1036.64 619.40C1041.91 619.40 1044.54 619.40 1049.81 619.40C1055.07 619.40 1057.71 619.40 1062.97 619.40C1068.24 619.40 1070.88 619.40 1076.14 619.40C1081.41 619.40 1084.04 619.40 1089.31 619.40C1094.58 619.40 1097.21 619.40 1102.48 619.40C1107.74 619.40 1110.38 619.40 1115.64 619.40C1120.91 619.40 1123.54 619.40 1128.81 619.40L1128.81 619.4L733.80 619.4Z" fill="rgba(75,192,192,0.2)"/><path d="M733.80 605.82C739.07 611.25 740.76 616.20 746.97 619.40C751.29 619.40 754.87 619.40 760.13 619.40C765.40 619.40 768.03 619.40 773.30 619.40C778.57 619.40 782.87 619.40 786.47 619.40C793.40 613.69 792.88 601.96 799.63 597.73C803.41 595.37 807.58 600.75 812.80 602.93C818.11 605.14 821.14 605.68 825.97 608.71C831.67 612.27 833.44 618.35 839.14 619.40C843.97 619.40 846.80 614.84 852.30 613.58C857.34 612.42 861.72 616.22 865.47 613.37C872.25 608.21 873.14 594.08 878.64 593.56C883.67 593.08 885.24 606.49 891.80 610.88C895.78 613.54 904.04 615.93 904.97 611.16C914.57 562.09 913.03 474.67 918.14 476.26C923.56 477.96 921.66 566.95 931.30 619.40C932.19 619.40 939.21 619.40 944.47 619.40C949.74 619.40 952.37 619.40 957.64 619.40C962.91 619.40 965.54 619.40 970.81 619.40C976.07 619.40 978.71 619.40 983.97 619.40C989.24 619.40 991.87 619.40 997.14 619.40C1002.41 619.40 1005.04 619.40 1010.31 619.40C1015.57 619.40 1018.21 619.40 1023.47 619.40C1028.74 619.40 1031.37 619.40 1036.64 619.40C1041.91 619.40 1044.54 619.40 1049.81 619.40C1055.07 619.40 1057.71 619.40 1062.97 619.40C1068.24 619.40 1070.88 619.40 1076.14 619.40C1081.41 619.40 1084.04 619.40 1089.31 619.40C1094.58 619.40 1097.21 619.40 1102.48 619.40C1107.74 619.40 1110.38 619.40 1115.64 619.40C1120.91 619.40 1123.54 619.40 1128.81 619.40" fill="none" stroke="rgb(255,159,64)" stroke-width="1.5" stroke-opacity="0.8"/><circle cx="733.80" cy="605.82" r="3.2" fill="rgba(255,159,64,0.2)" stroke="rgb(255,159,64)" stroke-width="1.1" stroke-opacity="0.85"/><circle cx="746.97" cy="619.40" r="3.2" fill="rgba(255,159,64,0.2)" stroke="rgb(255,159,64)" stroke-width="1.1" stroke-opacity="0.85"/><circle cx="760.13" cy="619.40" r="3.2" fill="rgba(255,159,64,0.2)" stroke="rgb(255,159,64)" stroke-width="1.1" stroke-opacity="0.85"/><circle cx="773.30" cy="619.40" r="3.2" fill="rgba(255,159,64,0.2)" stroke="rgb(255,159,64)" stroke-width="1.1" stroke-opacity="0.85"/><circle cx="786.47" cy="619.40" r="3.2" fill="rgba(255,159,64,0.2)" stroke="rgb(255,159,64)" stroke-width="1.1" stroke-opacity="0.85"/><circle cx="799.63" cy="597.73" r="3.2" fill="rgba(255,159,64,0.2)" stroke="rgb(255,159,64)" stroke-width="1.1" stroke-opacity="0.85"/><circle cx="812.80" cy="602.93" r="3.2" fill="rgba(255,159,64,0.2)" stroke="rgb(255,159,64)" stroke-width="1.1" stroke-opacity="0.85"/><circle cx="825.97" cy="608.71" r="3.2" fill="rgba(255,159,64,0.2)" stroke="rgb(255,159,64)" stroke-width="1.1" stroke-opacity="0.85"/><circle cx="839.14" cy="619.40" r="3.2" fill="rgba(255,159,64,0.2)" stroke="rgb(255,159,64)" stroke-width="1.1" stroke-opacity="0.85"/><circle cx="852.30" cy="613.58" r="3.2" fill="rgba(255,159,64,0.2)" stroke="rgb(255,159,64)" stroke-width="1.1" stroke-opacity="0.85"/><circle cx="865.47" cy="613.37" r="3.2" fill="rgba(255,159,64,0.2)" stroke="rgb(255,159,64)" stroke-width="1.1" stroke-opacity="0.85"/><circle cx="878.64" cy="593.56" r="3.2" fill="rgba(255,159,64,0.2)" stroke="rgb(255,159,64)" stroke-width="1.1" stroke-opacity="0.85"/><circle cx="891.80" cy="610.88" r="3.2" fill="rgba(255,159,64,0.2)" stroke="rgb(255,159,64)" stroke-width="1.1" stroke-opacity="0.85"/><circle cx="904.97" cy="611.16" r="3.2" fill="rgba(255,159,64,0.2)" stroke="rgb(255,159,64)" stroke-width="1.1" stroke-opacity="0.85"/><circle cx="918.14" cy="476.26" r="3.2" fill="rgba(255,159,64,0.2)" stroke="rgb(255,159,64)" stroke-width="1.1" stroke-opacity="0.85"/><circle cx="931.30" cy="619.40" r="3.2" fill="rgba(255,159,64,0.2)" stroke="rgb(255,159,64)" stroke-width="1.1" stroke-opacity="0.85"/><circle cx="944.47" cy="619.40" r="3.2" fill="rgba(255,159,64,0.2)" stroke="rgb(255,159,64)" stroke-width="1.1" stroke-opacity="0.85"/><circle cx="957.64" cy="619.40" r="3.2" fill="rgba(255,159,64,0.2)" stroke="rgb(255,159,64)" stroke-width="1.1" stroke-opacity="0.85"/><circle cx="970.81" cy="619.40" r="3.2" fill="rgba(255,159,64,0.2)" stroke="rgb(255,159,64)" stroke-width="1.1" stroke-opacity="0.85"/><circle cx="983.97" cy="619.40" r="3.2" fill="rgba(255,159,64,0.2)" stroke="rgb(255,159,64)" stroke-width="1.1" stroke-opacity="0.85"/><circle cx="997.14" cy="619.40" r="3.2" fill="rgba(255,159,64,0.2)" stroke="rgb(255,159,64)" stroke-width="1.1" stroke-opacity="0.85"/><circle cx="1010.31" cy="619.40" r="3.2" fill="rgba(255,159,64,0.2)" stroke="rgb(255,159,64)" stroke-width="1.1" stroke-opacity="0.85"/><circle cx="1023.47" cy="619.40" r="3.2" fill="rgba(255,159,64,0.2)" stroke="rgb(255,159,64)" stroke-width="1.1" stroke-opacity="0.85"/><circle cx="1036.64" cy="619.40" r="3.2" fill="rgba(255,159,64,0.2)" stroke="rgb(255,159,64)" stroke-width="1.1" stroke-opacity="0.85"/><circle cx="1049.81" cy="619.40" r="3.2" fill="rgba(255,159,64,0.2)" stroke="rgb(255,159,64)" stroke-width="1.1" stroke-opacity="0.85"/><circle cx="1062.97" cy="619.40" r="3.2" fill="rgba(255,159,64,0.2)" stroke="rgb(255,159,64)" stroke-width="1.1" stroke-opacity="0.85"/><circle cx="1076.14" cy="619.40" r="3.2" fill="rgba(255,159,64,0.2)" stroke="rgb(255,159,64)" stroke-width="1.1" stroke-opacity="0.85"/><circle cx="1089.31" cy="619.40" r="3.2" fill="rgba(255,159,64,0.2)" stroke="rgb(255,159,64)" stroke-width="1.1" stroke-opacity="0.85"/><circle cx="1102.48" cy="619.40" r="3.2" fill="rgba(255,159,64,0.2)" stroke="rgb(255,159,64)" stroke-width="1.1" stroke-opacity="0.85"/><circle cx="1115.64" cy="619.40" r="3.2" fill="rgba(255,159,64,0.2)" stroke="rgb(255,159,64)" stroke-width="1.1" stroke-opacity="0.85"/><circle cx="1128.81" cy="619.40" r="3.2" fill="rgba(255,159,64,0.2)" stroke="rgb(255,159,64)" stroke-width="1.1" stroke-opacity="0.85"/><path d="M733.80 603.51C739.07 609.87 740.54 615.52 746.97 619.40C751.07 619.40 754.87 619.40 760.13 619.40C765.40 619.40 768.03 619.40 773.30 619.40C778.57 619.40 782.87 619.40 786.47 619.40C793.40 613.69 792.74 602.80 799.63 597.73C803.27 595.06 808.08 597.86 812.80 600.05C818.61 602.73 820.67 605.99 825.97 609.89C831.20 613.73 834.88 619.40 839.14 619.40C845.41 616.89 846.62 607.08 852.30 599.38C857.16 592.79 861.54 581.29 865.47 583.69C872.07 587.71 871.04 606.76 878.64 615.42C881.57 618.77 886.94 615.53 891.80 613.72C897.47 611.61 899.80 605.43 904.97 605.63C910.33 605.83 912.52 611.77 918.14 614.71C923.05 617.28 925.88 618.43 931.30 619.40C936.41 619.40 939.21 619.40 944.47 619.40C949.74 619.40 952.37 619.40 957.64 619.40C962.91 619.40 965.54 619.40 970.81 619.40C976.07 619.40 978.71 619.40 983.97 619.40C989.24 619.40 991.87 619.40 997.14 619.40C1002.41 619.40 1005.04 619.40 1010.31 619.40C1015.57 619.40 1018.21 619.40 1023.47 619.40C1028.74 619.40 1031.37 619.40 1036.64 619.40C1041.91 619.40 1044.54 619.40 1049.81 619.40C1055.07 619.40 1057.71 619.40 1062.97 619.40C1068.24 619.40 1070.88 619.40 1076.14 619.40C1081.41 619.40 1084.04 619.40 1089.31 619.40C1094.58 619.40 1097.21 619.40 1102.48 619.40C1107.74 619.40 1110.38 619.40 1115.64 619.40C1120.91 619.40 1123.54 619.40 1128.81 619.40" fill="none" stroke="rgb(75,192,192)" stroke-width="1.5" stroke-opacity="0.8"/><circle cx="733.80" cy="603.51" r="3.2" fill="rgba(75,192,192,0.2)" stroke="rgb(75,192,192)" stroke-width="1.1" stroke-opacity="0.85"/><circle cx="746.97" cy="619.40" r="3.2" fill="rgba(75,192,192,0.2)" stroke="rgb(75,192,192)" stroke-width="1.1" stroke-opacity="0.85"/><circle cx="760.13" cy="619.40" r="3.2" fill="rgba(75,192,192,0.2)" stroke="rgb(75,192,192)" stroke-width="1.1" stroke-opacity="0.85"/><circle cx="773.30" cy="619.40" r="3.2" fill="rgba(75,192,192,0.2)" stroke="rgb(75,192,192)" stroke-width="1.1" stroke-opacity="0.85"/><circle cx="786.47" cy="619.40" r="3.2" fill="rgba(75,192,192,0.2)" stroke="rgb(75,192,192)" stroke-width="1.1" stroke-opacity="0.85"/><circle cx="799.63" cy="597.73" r="3.2" fill="rgba(75,192,192,0.2)" stroke="rgb(75,192,192)" stroke-width="1.1" stroke-opacity="0.85"/><circle cx="812.80" cy="600.05" r="3.2" fill="rgba(75,192,192,0.2)" stroke="rgb(75,192,192)" stroke-width="1.1" stroke-opacity="0.85"/><circle cx="825.97" cy="609.89" r="3.2" fill="rgba(75,192,192,0.2)" stroke="rgb(75,192,192)" stroke-width="1.1" stroke-opacity="0.85"/><circle cx="839.14" cy="619.40" r="3.2" fill="rgba(75,192,192,0.2)" stroke="rgb(75,192,192)" stroke-width="1.1" stroke-opacity="0.85"/><circle cx="852.30" cy="599.38" r="3.2" fill="rgba(75,192,192,0.2)" stroke="rgb(75,192,192)" stroke-width="1.1" stroke-opacity="0.85"/><circle cx="865.47" cy="583.69" r="3.2" fill="rgba(75,192,192,0.2)" stroke="rgb(75,192,192)" stroke-width="1.1" stroke-opacity="0.85"/><circle cx="878.64" cy="615.42" r="3.2" fill="rgba(75,192,192,0.2)" stroke="rgb(75,192,192)" stroke-width="1.1" stroke-opacity="0.85"/><circle cx="891.80" cy="613.72" r="3.2" fill="rgba(75,192,192,0.2)" stroke="rgb(75,192,192)" stroke-width="1.1" stroke-opacity="0.85"/><circle cx="904.97" cy="605.63" r="3.2" fill="rgba(75,192,192,0.2)" stroke="rgb(75,192,192)" stroke-width="1.1" stroke-opacity="0.85"/><circle cx="918.14" cy="614.71" r="3.2" fill="rgba(75,192,192,0.2)" stroke="rgb(75,192,192)" stroke-width="1.1" stroke-opacity="0.85"/><circle cx="931.30" cy="619.40" r="3.2" fill="rgba(75,192,192,0.2)" stroke="rgb(75,192,192)" stroke-width="1.1" stroke-opacity="0.85"/><circle cx="944.47" cy="619.40" r="3.2" fill="rgba(75,192,192,0.2)" stroke="rgb(75,192,192)" stroke-width="1.1" stroke-opacity="0.85"/><circle cx="957.64" cy="619.40" r="3.2" fill="rgba(75,192,192,0.2)" stroke="rgb(75,192,192)" stroke-width="1.1" stroke-opacity="0.85"/><circle cx="970.81" cy="619.40" r="3.2" fill="rgba(75,192,192,0.2)" stroke="rgb(75,192,192)" stroke-width="1.1" stroke-opacity="0.85"/><circle cx="983.97" cy="619.40" r="3.2" fill="rgba(75,192,192,0.2)" stroke="rgb(75,192,192)" stroke-width="1.1" stroke-opacity="0.85"/><circle cx="997.14" cy="619.40" r="3.2" fill="rgba(75,192,192,0.2)" stroke="rgb(75,192,192)" stroke-width="1.1" stroke-opacity="0.85"/><circle cx="1010.31" cy="619.40" r="3.2" fill="rgba(75,192,192,0.2)" stroke="rgb(75,192,192)" stroke-width="1.1" stroke-opacity="0.85"/><circle cx="1023.47" cy="619.40" r="3.2" fill="rgba(75,192,192,0.2)" stroke="rgb(75,192,192)" stroke-width="1.1" stroke-opacity="0.85"/><circle cx="1036.64" cy="619.40" r="3.2" fill="rgba(75,192,192,0.2)" stroke="rgb(75,192,192)" stroke-width="1.1" stroke-opacity="0.85"/><circle cx="1049.81" cy="619.40" r="3.2" fill="rgba(75,192,192,0.2)" stroke="rgb(75,192,192)" stroke-width="1.1" stroke-opacity="0.85"/><circle cx="1062.97" cy="619.40" r="3.2" fill="rgba(75,192,192,0.2)" stroke="rgb(75,192,192)" stroke-width="1.1" stroke-opacity="0.85"/><circle cx="1076.14" cy="619.40" r="3.2" fill="rgba(75,192,192,0.2)" stroke="rgb(75,192,192)" stroke-width="1.1" stroke-opacity="0.85"/><circle cx="1089.31" cy="619.40" r="3.2" fill="rgba(75,192,192,0.2)" stroke="rgb(75,192,192)" stroke-width="1.1" stroke-opacity="0.85"/><circle cx="1102.48" cy="619.40" r="3.2" fill="rgba(75,192,192,0.2)" stroke="rgb(75,192,192)" stroke-width="1.1" stroke-opacity="0.85"/><circle cx="1115.64" cy="619.40" r="3.2" fill="rgba(75,192,192,0.2)" stroke="rgb(75,192,192)" stroke-width="1.1" stroke-opacity="0.85"/><circle cx="1128.81" cy="619.40" r="3.2" fill="rgba(75,192,192,0.2)" stroke="rgb(75,192,192)" stroke-width="1.1" stroke-opacity="0.85"/><rect x="850.5" y="432.5" width="30" height="9" fill="rgba(75,192,192,0.2)" stroke="rgb(75,192,192)" stroke-width="1"/><rect x="917.5" y="432.5" width="30" height="9" fill="rgba(255,159,64,0.2)" stroke="rgb(255,159,64)" stroke-width="1"/></svg>
<div class="t" style="left:885px;top:432.42px;font-size:9.5px;color:#666;transform:scaleX(0.94);transform-origin:left center;">Loja 1</div>
<div class="t" style="left:952px;top:432.42px;font-size:9.5px;color:#666;transform:scaleX(0.94);transform-origin:left center;">Loja 2</div>
<div class="t" style="right:1110.5px;top:614.02px;font-size:9.5px;color:#666;transform:scaleX(0.98);transform-origin:right center;">0</div>
<div class="t" style="right:1110.5px;top:585.62px;font-size:9.5px;color:#666;transform:scaleX(0.98);transform-origin:right center;">20000</div>
<div class="t" style="right:1110.5px;top:557.22px;font-size:9.5px;color:#666;transform:scaleX(0.98);transform-origin:right center;">40000</div>
<div class="t" style="right:1110.5px;top:528.82px;font-size:9.5px;color:#666;transform:scaleX(0.98);transform-origin:right center;">60000</div>
<div class="t" style="right:1110.5px;top:500.42px;font-size:9.5px;color:#666;transform:scaleX(0.98);transform-origin:right center;">80000</div>
<div class="t" style="right:1110.5px;top:472.02px;font-size:9.5px;color:#666;transform:scaleX(0.98);transform-origin:right center;">100000</div>
<div class="t" style="right:1110.5px;top:443.62px;font-size:9.5px;color:#666;transform:scaleX(0.98);transform-origin:right center;">120000</div>
<div class="t" style="left:702.30px;top:621.50px;width:30px;text-align:right;font-size:9.5px;color:#666;transform-origin:right top;transform:rotate(-50deg) translate(-2px,0)">1</div>
<div class="t" style="left:728.63px;top:621.50px;width:30px;text-align:right;font-size:9.5px;color:#666;transform-origin:right top;transform:rotate(-50deg) translate(-2px,0)">3</div>
<div class="t" style="left:754.97px;top:621.50px;width:30px;text-align:right;font-size:9.5px;color:#666;transform-origin:right top;transform:rotate(-50deg) translate(-2px,0)">5</div>
<div class="t" style="left:781.30px;top:621.50px;width:30px;text-align:right;font-size:9.5px;color:#666;transform-origin:right top;transform:rotate(-50deg) translate(-2px,0)">7</div>
<div class="t" style="left:807.64px;top:621.50px;width:30px;text-align:right;font-size:9.5px;color:#666;transform-origin:right top;transform:rotate(-50deg) translate(-2px,0)">9</div>
<div class="t" style="left:833.97px;top:621.50px;width:30px;text-align:right;font-size:9.5px;color:#666;transform-origin:right top;transform:rotate(-50deg) translate(-2px,0)">11</div>
<div class="t" style="left:860.30px;top:621.50px;width:30px;text-align:right;font-size:9.5px;color:#666;transform-origin:right top;transform:rotate(-50deg) translate(-2px,0)">13</div>
<div class="t" style="left:886.64px;top:621.50px;width:30px;text-align:right;font-size:9.5px;color:#666;transform-origin:right top;transform:rotate(-50deg) translate(-2px,0)">15</div>
<div class="t" style="left:912.97px;top:621.50px;width:30px;text-align:right;font-size:9.5px;color:#666;transform-origin:right top;transform:rotate(-50deg) translate(-2px,0)">17</div>
<div class="t" style="left:939.31px;top:621.50px;width:30px;text-align:right;font-size:9.5px;color:#666;transform-origin:right top;transform:rotate(-50deg) translate(-2px,0)">19</div>
<div class="t" style="left:965.64px;top:621.50px;width:30px;text-align:right;font-size:9.5px;color:#666;transform-origin:right top;transform:rotate(-50deg) translate(-2px,0)">21</div>
<div class="t" style="left:991.97px;top:621.50px;width:30px;text-align:right;font-size:9.5px;color:#666;transform-origin:right top;transform:rotate(-50deg) translate(-2px,0)">23</div>
<div class="t" style="left:1018.31px;top:621.50px;width:30px;text-align:right;font-size:9.5px;color:#666;transform-origin:right top;transform:rotate(-50deg) translate(-2px,0)">25</div>
<div class="t" style="left:1044.64px;top:621.50px;width:30px;text-align:right;font-size:9.5px;color:#666;transform-origin:right top;transform:rotate(-50deg) translate(-2px,0)">27</div>
<div class="t" style="left:1070.98px;top:621.50px;width:30px;text-align:right;font-size:9.5px;color:#666;transform-origin:right top;transform:rotate(-50deg) translate(-2px,0)">29</div>
<div class="t" style="left:1097.31px;top:621.50px;width:30px;text-align:right;font-size:9.5px;color:#666;transform-origin:right top;transform:rotate(-50deg) translate(-2px,0)">31</div>
<div class="a" style="left:1165px;top:105px;width:672px;height:900px;background:#232025;"></div>
<div class="a" style="left:1165px;top:105px;width:1px;height:900px;background:#4a4052;"></div>
<div class="a" style="left:1166px;top:105px;width:671px;height:27px;background:#3a3043;"></div>
<div class="a" style="left:1166px;top:132px;width:671px;height:1px;background:#4a4052;"></div>
<div class="a" style="left:1166px;top:159px;width:671px;height:1px;background:#4a4052;"></div>
<div class="a" style="left:1166px;top:210px;width:671px;height:1px;background:#4a4052;"></div>
<div class="a" style="left:1166px;top:291px;width:671px;height:1px;background:#4a4052;"></div>
<div class="a" style="left:1166px;top:318px;width:671px;height:1px;background:#4a4052;"></div>
<div class="a" style="left:1166px;top:319px;width:671px;height:1px;background:#1b1a1e;"></div>
<svg class="a" style="left:1175px;top:112px" width="15" height="15" viewBox="0 0 15 15"><g fill="#cdc6d2"><rect x="0" y="0" width="1.3" height="1.3"/><rect x="3.2" y="0" width="1.3" height="1.3"/><rect x="6.4" y="0" width="1.3" height="1.3"/><rect x="9.6" y="0" width="1.3" height="1.3"/><rect x="12.8" y="0" width="1.3" height="1.3"/><rect x="0" y="3.2" width="1.3" height="1.3"/><rect x="12.8" y="3.2" width="1.3" height="1.3"/><rect x="0" y="6.4" width="1.3" height="1.3"/><rect x="0" y="9.6" width="1.3" height="1.3"/><rect x="0" y="12.8" width="1.3" height="1.3"/><rect x="3.2" y="12.8" width="1.3" height="1.3"/></g><path d="M6.3 14.3V6.3H14.3M6.3 6.3L14 14" stroke="#cdc6d2" stroke-width="1.3" fill="none"/></svg>
<svg class="a" style="left:1202px;top:113px" width="17" height="13" viewBox="0 0 17 13"><path d="M2.8 12V0.7H15" stroke="#cdc6d2" stroke-width="1.3" fill="none"/><rect x="0" y="11" width="8" height="1.6" fill="#cdc6d2"/><rect x="10.6" y="3.6" width="5.6" height="8.8" stroke="#cdc6d2" stroke-width="1.3" fill="none"/></svg>
<div class="a" style="left:1228px;top:111px;width:1px;height:16px;background:#4a4052;"></div>
<div class="t" style="left:1241.2px;top:113.23px;font-size:13px;color:#e3dde6;transform:scaleX(0.973);transform-origin:left center;">Elements</div>
<div class="t" style="left:1315.2px;top:113.23px;font-size:13px;color:#e3dde6;transform:scaleX(0.973);transform-origin:left center;">Console</div>
<div class="t" style="left:1382.4px;top:113.23px;font-size:13px;color:#e3dde6;transform:scaleX(0.969);transform-origin:left center;">Sources</div>
<div class="t" style="left:1450.1px;top:113.23px;font-size:13px;color:#d6a9f8;transform:scaleX(1.009);transform-origin:left center;">Network</div>
<div class="t" style="left:1519.4px;top:113.23px;font-size:13px;color:#e3dde6;transform:scaleX(0.99);transform-origin:left center;">Performance</div>
<div class="t" style="left:1614.2px;top:113.23px;font-size:13px;color:#e3dde6;transform:scaleX(0.993);transform-origin:left center;">Memory</div>
<div class="t" style="left:1681.9px;top:113.23px;font-size:13px;color:#e3dde6;transform:scaleX(1.027);transform-origin:left center;">Application</div>
<div class="a" style="left:1440px;top:130px;width:69px;height:3px;background:#d3a5f5;border-radius:2px 2px 0 0"></div>
<svg class="a" style="left:1762px;top:114px" width="12" height="11" viewBox="0 0 12 11"><path d="M1 1L5.3 5.5L1 10M6.5 1L10.8 5.5L6.5 10" stroke="#cdc6d2" stroke-width="1.3" fill="none"/></svg>
<svg class="a" style="left:1787px;top:114px" width="10" height="11" viewBox="0 0 10 11"><path d="M0 0H10V8H2.6L0 10.5Z" fill="#e8453c"/><path d="M3.3 2.3L6.7 5.7M6.7 2.3L3.3 5.7" stroke="#3a1a1a" stroke-width="1.1"/></svg>
<div class="t" style="left:1799.5px;top:113.27px;font-size:12.5px;color:#dcd6e0;font-weight:bold;transform:scaleX(0.9);transform-origin:left center;">1</div>
<div class="a" style="left:1814px;top:111px;width:1px;height:16px;background:#4a4052;"></div>
<svg class="a" style="left:1825px;top:111px" width="16" height="16" viewBox="0 0 16 16"><circle cx="8" cy="8" r="5" stroke="#cdc6d2" stroke-width="1.4" fill="none"/><circle cx="8" cy="8" r="2" stroke="#cdc6d2" stroke-width="1.3" fill="none"/><g stroke="#cdc6d2" stroke-width="2.2"><path d="M8 1V3M8 13V15M1 8H3M13 8H15M3 3L4.4 4.4M11.6 11.6L13 13M13 3L11.6 4.4M4.4 11.6L3 13"/></g></svg>
<svg class="a" style="left:1174px;top:138px" width="16" height="16" viewBox="0 0 16 16"><circle cx="8" cy="8" r="6.8" stroke="#f0453b" stroke-width="1.5" fill="none"/><rect x="4.8" y="4.8" width="6.4" height="6.4" fill="#f0453b"/></svg>
<svg class="a" style="left:1202px;top:138px" width="16" height="16" viewBox="0 0 16 16"><circle cx="8" cy="8" r="6.8" stroke="#cdc6d2" stroke-width="1.4" fill="none"/><path d="M3.4 12.6L12.6 3.4" stroke="#cdc6d2" stroke-width="1.4"/></svg>
<div class="a" style="left:1228px;top:138px;width:1px;height:16px;background:#4a4052;"></div>
<svg class="a" style="left:1240px;top:140px" width="13" height="13" viewBox="0 0 13 13"><path d="M0 0H13L8 6V12.5H5V6Z" fill="#c79ae8"/></svg>
<svg class="a" style="left:1267px;top:139px" width="14" height="14" viewBox="0 0 14 14"><circle cx="5.5" cy="5.5" r="4.5" stroke="#cdc6d2" stroke-width="1.4" fill="none"/><path d="M8.8 8.8L13.3 13.3" stroke="#cdc6d2" stroke-width="1.5"/></svg>
<div class="a" style="left:1293px;top:138px;width:1px;height:16px;background:#4a4052;"></div>
<div class="a" style="left:1304px;top:140px;width:12px;height:12px;border:1.3px solid #8d8593;border-radius:2.5px"></div>
<div class="t" style="left:1322.3px;top:140.03px;font-size:13px;color:#e3dde6;transform:scaleX(0.956);transform-origin:left center;">Preserve log</div>
<div class="a" style="left:1402px;top:138px;width:1px;height:16px;background:#4a4052;"></div>
<div class="a" style="left:1413px;top:140px;width:12px;height:12px;border:1.3px solid #8d8593;border-radius:2.5px"></div>
<div class="t" style="left:1430.4px;top:140.03px;font-size:13px;color:#e3dde6;transform:scaleX(0.972);transform-origin:left center;">Disable cache</div>
<div class="t" style="left:1522.7px;top:140.03px;font-size:13px;color:#e3dde6;transform:scaleX(1.013);transform-origin:left center;">No throttling</div>
<svg class="a" style="left:1614px;top:143px" width="8" height="5" viewBox="0 0 8 5"><path d="M0 0H8L4 4.5Z" fill="#cdc6d2"/></svg>
<svg class="a" style="left:1634px;top:138px" width="17" height="15" viewBox="0 0 17 15"><path d="M1 5A10 10 0 0 1 15 5M3.5 7.8A6.5 6.5 0 0 1 11 6.6M6 10.5A3 3 0 0 1 8 9.6" stroke="#cdc6d2" stroke-width="1.4" fill="none"/><circle cx="12.5" cy="11.5" r="2.3" stroke="#cdc6d2" stroke-width="1.6" fill="none"/></svg>
<div class="a" style="left:1660px;top:138px;width:1px;height:16px;background:#4a4052;"></div>
<svg class="a" style="left:1672px;top:139px" width="14" height="14" viewBox="0 0 14 14"><path d="M7 10V1.5M3 5.3L7 1.3L11 5.3M1 9.5V12.8H13V9.5" stroke="#cdc6d2" stroke-width="1.5" fill="none"/></svg>
<svg class="a" style="left:1700px;top:139px" width="14" height="14" viewBox="0 0 14 14"><path d="M7 1V9.5M3 5.7L7 9.7L11 5.7M1 9.5V12.8H13V9.5" stroke="#cdc6d2" stroke-width="1.5" fill="none"/></svg>
<div class="a" style="left:1171px;top:163px;width:551px;height:20px;border-radius:10px;background:#3a3043"></div>
<svg class="a" style="left:1183px;top:168px" width="10" height="10" viewBox="0 0 10 10"><path d="M0.5 0.7H9.5L6 5V9.5H4V5Z" stroke="#cdc6d2" stroke-width="1.2" fill="none"/></svg>
<div class="t" style="left:1199.1px;top:166.73px;font-size:13px;color:#cfc9d3;transform:scaleX(0.99);transform-origin:left center;">Filter</div>
<div class="a" style="left:1734px;top:167px;width:12px;height:12px;border:1.3px solid #8d8593;border-radius:2.5px"></div>
<div class="t" style="left:1752.6px;top:166.73px;font-size:13px;color:#e3dde6;transform:scaleX(0.966);transform-origin:left center;">Invert</div>
<div class="a" style="left:1796px;top:165px;width:1px;height:16px;background:#4a4052;"></div>
<div class="t" style="left:1814.5px;top:166.73px;font-size:13px;color:#e3dde6;">More filters</div>
<div class="a" style="left:1170px;top:189px;width:26px;height:19px;border-radius:7px;background:#4a3f55"></div>
<div class="t" style="left:1175.5px;top:192.72px;font-size:12px;color:#f1edf3;font-weight:bold;transform:scaleX(0.98);transform-origin:left center;">All</div>
<div class="a" style="left:1200px;top:191px;width:1px;height:15px;background:#4a4052;"></div>
<div class="a" style="left:1205.1px;top:189px;width:68.4px;height:19px;border:1px solid #6d6574;border-radius:7px"></div>
<div class="t" style="left:1205.1px;width:68.4px;top:192.72px;font-size:12px;font-weight:bold;color:#e6e1e9;text-align:center;transform:scaleX(0.95)">Fetch/XHR</div>
<div class="a" style="left:1278.2px;top:189px;width:32.2px;height:19px;border:1px solid #6d6574;border-radius:7px"></div>
<div class="t" style="left:1278.2px;width:32.2px;top:192.72px;font-size:12px;font-weight:bold;color:#e6e1e9;text-align:center;transform:scaleX(0.95)">Doc</div>
<div class="a" style="left:1315.2px;top:189px;width:33.5px;height:19px;border:1px solid #6d6574;border-radius:7px"></div>
<div class="t" style="left:1315.2px;width:33.5px;top:192.72px;font-size:12px;font-weight:bold;color:#e6e1e9;text-align:center;transform:scaleX(0.95)">CSS</div>
<div class="a" style="left:1353.4px;top:189px;width:25.2px;height:19px;border:1px solid #6d6574;border-radius:7px"></div>
<div class="t" style="left:1353.4px;width:25.2px;top:192.72px;font-size:12px;font-weight:bold;color:#e6e1e9;text-align:center;transform:scaleX(0.95)">JS</div>
<div class="a" style="left:1383.5px;top:189px;width:35.0px;height:19px;border:1px solid #6d6574;border-radius:7px"></div>
<div class="t" style="left:1383.5px;width:35.0px;top:192.72px;font-size:12px;font-weight:bold;color:#e6e1e9;text-align:center;transform:scaleX(0.95)">Font</div>
<div class="a" style="left:1423.3px;top:189px;width:31.1px;height:19px;border:1px solid #6d6574;border-radius:7px"></div>
<div class="t" style="left:1423.3px;width:31.1px;top:192.72px;font-size:12px;font-weight:bold;color:#e6e1e9;text-align:center;transform:scaleX(0.95)">Img</div>
<div class="a" style="left:1459.2px;top:189px;width:43.3px;height:19px;border:1px solid #6d6574;border-radius:7px"></div>
<div class="t" style="left:1459.2px;width:43.3px;top:192.72px;font-size:12px;font-weight:bold;color:#e6e1e9;text-align:center;transform:scaleX(0.95)">Media</div>
<div class="a" style="left:1507.2px;top:189px;width:58.4px;height:19px;border:1px solid #6d6574;border-radius:7px"></div>
<div class="t" style="left:1507.2px;width:58.4px;top:192.72px;font-size:12px;font-weight:bold;color:#e6e1e9;text-align:center;transform:scaleX(0.95)">Manifest</div>
<div class="a" style="left:1570.1px;top:189px;width:29.5px;height:19px;border:1px solid #6d6574;border-radius:7px"></div>
<div class="t" style="left:1570.1px;width:29.5px;top:192.72px;font-size:12px;font-weight:bold;color:#e6e1e9;text-align:center;transform:scaleX(0.95)">WS</div>
<div class="a" style="left:1604.3px;top:189px;width:43.2px;height:19px;border:1px solid #6d6574;border-radius:7px"></div>
<div class="t" style="left:1604.3px;width:43.2px;top:192.72px;font-size:12px;font-weight:bold;color:#e6e1e9;text-align:center;transform:scaleX(0.95)">Wasm</div>
<div class="a" style="left:1652.2px;top:189px;width:42.4px;height:19px;border:1px solid #6d6574;border-radius:7px"></div>
<div class="t" style="left:1652.2px;width:42.4px;top:192.72px;font-size:12px;font-weight:bold;color:#e6e1e9;text-align:center;transform:scaleX(0.95)">Other</div>
<div class="a" style="left:1230px;top:211px;width:1px;height:80px;background:#3d3744;"></div>
<div class="t" style="right:609.3999999999999px;top:215.59px;font-size:10.6px;color:#e3dde6;">2,000 ms</div>
<div class="a" style="left:1296px;top:211px;width:1px;height:80px;background:#3d3744;"></div>
<div class="t" style="right:544.3px;top:215.59px;font-size:10.6px;color:#e3dde6;">4,000 ms</div>
<div class="a" style="left:1360px;top:211px;width:1px;height:80px;background:#3d3744;"></div>
<div class="t" style="right:480.20000000000005px;top:215.59px;font-size:10.6px;color:#e3dde6;">6,000 ms</div>
<div class="a" style="left:1424px;top:211px;width:1px;height:80px;background:#3d3744;"></div>
<div class="t" style="right:415.5999999999999px;top:215.59px;font-size:10.6px;color:#e3dde6;">8,000 ms</div>
<div class="a" style="left:1488px;top:211px;width:1px;height:80px;background:#3d3744;"></div>
<div class="t" style="right:351.39999999999986px;top:215.59px;font-size:10.6px;color:#e3dde6;">10,000 ms</div>
<div class="a" style="left:1554px;top:211px;width:1px;height:80px;background:#3d3744;"></div>
<div class="t" style="right:286.0px;top:215.59px;font-size:10.6px;color:#e3dde6;">12,000 ms</div>
<div class="a" style="left:1618px;top:211px;width:1px;height:80px;background:#3d3744;"></div>
<div class="t" style="right:222.0px;top:215.59px;font-size:10.6px;color:#e3dde6;">14,000 ms</div>
<div class="a" style="left:1683px;top:211px;width:1px;height:80px;background:#3d3744;"></div>
<div class="t" style="right:157.0999999999999px;top:215.59px;font-size:10.6px;color:#e3dde6;">16,000 ms</div>
<div class="a" style="left:1747px;top:211px;width:1px;height:80px;background:#3d3744;"></div>
<div class="t" style="right:93.0px;top:215.59px;font-size:10.6px;color:#e3dde6;">18,000 ms</div>
<div class="a" style="left:1812px;top:211px;width:1px;height:80px;background:#3d3744;"></div>
<div class="t" style="right:28.09999999999991px;top:215.59px;font-size:10.6px;color:#e3dde6;">20,000 ms</div>
<div class="t" style="left:1824px;top:215.59px;font-size:10.6px;color:#e3dde6;">22,000 ms</div>
<div class="a" style="left:1167px;top:211px;width:1px;height:80px;background:#3d3744;"></div>
<div class="a" style="left:1166px;top:211px;width:5px;height:18px;background:#3a3043;border-radius:0 3px 3px 0"></div>
<div class="a" style="left:1167px;top:215px;width:1px;height:9px;background:#c79ae8;"></div>
<div class="a" style="left:1229px;top:231px;width:1px;height:60px;background:#8ab4f8;"></div>
<div class="a" style="left:1235px;top:231px;width:1px;height:60px;background:#f59c86;"></div>
<div class="a" style="left:1168px;top:239.5px;width:19px;height:2px;background:#27a845;"></div>
<div class="a" style="left:1188px;top:239.5px;width:24px;height:2px;background:#3b78e7;"></div>
<div class="a" style="left:1188px;top:236.5px;width:9px;height:2px;background:#555;"></div>
<div class="a" style="left:1201px;top:236.5px;width:9px;height:2px;background:#555;"></div>
<div class="a" style="left:1231px;top:236.5px;width:9px;height:2px;background:#555;"></div>
<div class="a" style="left:1192px;top:242.4px;width:26px;height:2px;background:#3b78e7;"></div>
<div class="a" style="left:1190px;top:242.4px;width:6px;height:2px;background:#27a845;"></div>
<div class="a" style="left:1199px;top:242.4px;width:4px;height:2px;background:#3b78e7;"></div>
<div class="a" style="left:1190px;top:245.3px;width:3px;height:2px;background:#27a845;"></div>
<div class="a" style="left:1195px;top:245.3px;width:18px;height:2px;background:#3b78e7;"></div>
<div class="a" style="left:1190px;top:248.3px;width:4px;height:2px;background:#27a845;"></div>
<div class="a" style="left:1196px;top:248.3px;width:16px;height:2px;background:#3b78e7;"></div>
<div class="a" style="left:1191px;top:251.3px;width:6px;height:2px;background:#555;"></div>
<div class="a" style="left:1199px;top:251.3px;width:12px;height:2px;background:#3b78e7;"></div>
<div class="a" style="left:1199px;top:254.3px;width:9px;height:2px;background:#3b78e7;"></div>
<div class="a" style="left:1198px;top:257.3px;width:2px;height:2px;background:#27a845;"></div>
<div class="a" style="left:1201px;top:257.3px;width:10px;height:2px;background:#3b78e7;"></div>
<div class="a" style="left:1202px;top:260.3px;width:12px;height:2px;background:#3b78e7;"></div>
<div class="a" style="left:1228.3px;top:242.4px;width:95.7px;height:2px;background:#27a845;"></div>
<div class="a" style="left:1325px;top:242.4px;width:9px;height:2px;background:#3b78e7;"></div>
<div class="a" style="left:1237px;top:245.3px;width:9px;height:2px;background:#3b78e7;"></div>
<div class="a" style="left:1228.3px;top:251.4px;width:98.6px;height:2px;background:#27a845;"></div>
<div class="a" style="left:1328px;top:251.4px;width:9px;height:2px;background:#3b78e7;"></div>
<div class="a" style="left:1338px;top:251.4px;width:60.2px;height:2px;background:#27a845;"></div>
<div class="a" style="left:1399px;top:251.4px;width:9px;height:2px;background:#3b78e7;"></div>
<div class="a" style="left:1517.9px;top:251.3px;width:81.3px;height:2px;background:#27a845;"></div>
<div class="a" style="left:1600px;top:251.3px;width:10px;height:2px;background:#3b78e7;"></div>
<div class="a" style="left:1517.9px;top:263.3px;width:143.3px;height:2px;background:#27a845;"></div>
<div class="a" style="left:1662px;top:263.3px;width:9px;height:2px;background:#3b78e7;"></div>
<div class="a" style="left:1672px;top:263.3px;width:122.5px;height:2px;background:#27a845;"></div>
<div class="a" style="left:1795px;top:263.3px;width:9px;height:2px;background:#3b78e7;"></div>
<div class="a" style="left:1166px;top:292px;width:671px;height:26px;background:#232025;"></div>
<div class="a" style="left:1440px;top:292px;width:1px;height:217px;background:#3d3744;"></div>
<div class="a" style="left:1554px;top:292px;width:1px;height:217px;background:#3d3744;"></div>
<div class="a" style="left:1637px;top:292px;width:1px;height:217px;background:#3d3744;"></div>
<div class="a" style="left:1774px;top:292px;width:1px;height:217px;background:#3d3744;"></div>
<div class="t" style="left:1171.8px;top:298.82px;font-size:12px;color:#e3dde6;">Name</div>
<div class="t" style="left:1446px;top:298.82px;font-size:12px;color:#e3dde6;transform:scaleX(0.97);transform-origin:left center;">Status</div>
<div class="t" style="left:1559.5px;top:298.82px;font-size:12px;color:#e3dde6;transform:scaleX(0.98);transform-origin:left center;">Type</div>
<div class="t" style="left:1642.3px;top:298.82px;font-size:12px;color:#e3dde6;transform:scaleX(0.98);transform-origin:left center;">Initiator</div>
<div class="t" style="left:1779.5px;top:298.82px;font-size:12px;color:#e3dde6;transform:scaleX(0.98);transform-origin:left center;">Size</div>
<div class="a" style="left:1166px;top:319.7px;width:671px;height:21.3px;background:#1b1a1e;"></div>
<svg class="a" style="left:1172px;top:325.7px" width="12" height="12" viewBox="0 0 12 12"><rect x="0.7" y="0.7" width="10.6" height="10.6" rx="1.5" stroke="#2a9fc9" stroke-width="1.4" fill="none"/><path d="M3.5 3.6H8.5M6 3.6V9" stroke="#2a9fc9" stroke-width="1.5"/></svg>
<div class="t" style="left:1188.9px;top:324.13px;font-size:13px;color:#e8e3eb;transform:scaleX(0.99);transform-origin:left center;">fa-solid-900.woff2</div>
<div class="t" style="left:1446px;top:324.13px;font-size:13px;color:#e8e3eb;">200</div>
<div class="t" style="left:1559.5px;top:324.13px;font-size:13px;color:#e8e3eb;">font</div>
<div class="t" style="left:1642.3px;top:324.13px;font-size:13px;color:#e8e3eb;text-decoration:underline;">fontawesome-all.css</div>
<div class="t" style="right:3px;top:324.13px;font-size:13px;color:#e8e3eb;">44.3</div>
<div class="a" style="left:1166px;top:340.7px;width:671px;height:21.3px;background:#222025;"></div>
<svg class="a" style="left:1171px;top:346.7px" width="14" height="12" viewBox="0 0 14 12"><path d="M3.6 0.8Q2 0.8 2 2.5V4.5Q2 6 0.6 6Q2 6 2 7.5V9.5Q2 11.2 3.6 11.2M10.4 0.8Q12 0.8 12 2.5V4.5Q12 6 13.4 6Q12 6 12 7.5V9.5Q12 11.2 10.4 11.2" stroke="#f0843f" stroke-width="1.4" fill="none"/><circle cx="7" cy="4" r="1" fill="#f0843f"/><path d="M7 6.8V8.8L6.2 9.8" stroke="#f0843f" stroke-width="1.4" fill="none"/></svg>
<div class="t" style="left:1188.9px;top:345.16px;font-size:13px;color:#e8e3eb;transform:scaleX(0.99);transform-origin:left center;">dashboard?loja=2</div>
<div class="t" style="left:1446px;top:345.16px;font-size:13px;color:#e8e3eb;">200</div>
<div class="t" style="left:1559.5px;top:345.16px;font-size:13px;color:#e8e3eb;">xhr</div>
<div class="t" style="left:1642.3px;top:345.16px;font-size:13px;color:#e8e3eb;text-decoration:underline;">app.js:279</div>
<div class="t" style="right:3px;top:345.16px;font-size:13px;color:#e8e3eb;">1.7</div>
<div class="a" style="left:1166px;top:361.8px;width:671px;height:21.3px;background:#1b1a1e;"></div>
<svg class="a" style="left:1171px;top:367.8px" width="14" height="12" viewBox="0 0 14 12"><path d="M3.6 0.8Q2 0.8 2 2.5V4.5Q2 6 0.6 6Q2 6 2 7.5V9.5Q2 11.2 3.6 11.2M10.4 0.8Q12 0.8 12 2.5V4.5Q12 6 13.4 6Q12 6 12 7.5V9.5Q12 11.2 10.4 11.2" stroke="#f0843f" stroke-width="1.4" fill="none"/><circle cx="7" cy="4" r="1" fill="#f0843f"/><path d="M7 6.8V8.8L6.2 9.8" stroke="#f0843f" stroke-width="1.4" fill="none"/></svg>
<div class="t" style="left:1188.9px;top:366.19px;font-size:13px;color:#e8e3eb;transform:scaleX(0.99);transform-origin:left center;">vendas-por-dia?loja=1</div>
<div class="t" style="left:1446px;top:366.19px;font-size:13px;color:#e8e3eb;">200</div>
<div class="t" style="left:1559.5px;top:366.19px;font-size:13px;color:#e8e3eb;">xhr</div>
<div class="t" style="left:1642.3px;top:366.19px;font-size:13px;color:#e8e3eb;text-decoration:underline;">app.js:279</div>
<div class="t" style="right:3px;top:366.19px;font-size:13px;color:#e8e3eb;">1.4</div>
<div class="a" style="left:1166px;top:382.8px;width:671px;height:21.3px;background:#222025;"></div>
<svg class="a" style="left:1172px;top:388.8px" width="12" height="12" viewBox="0 0 12 12"><rect x="0.7" y="0.7" width="10.6" height="10.6" rx="1.5" stroke="#f0843f" stroke-width="1.4" fill="none"/><path d="M4.6 4L2.8 6L4.6 8M7.4 4L9.2 6L7.4 8" stroke="#f0843f" stroke-width="1.2" fill="none"/></svg>
<div class="t" style="left:1188.9px;top:387.22px;font-size:13px;color:#e8e3eb;transform:scaleX(0.99);transform-origin:left center;">detector-exec.js</div>
<div class="t" style="left:1446px;top:387.22px;font-size:13px;color:#e8e3eb;">200</div>
<div class="t" style="left:1559.5px;top:387.22px;font-size:13px;color:#e8e3eb;">script</div>
<div class="t" style="left:1642.3px;top:387.22px;font-size:13px;color:#e8e3eb;text-decoration:underline;">detector.js:1</div>
<div class="t" style="right:3px;top:387.22px;font-size:13px;color:#e8e3eb;">1.2</div>
<div class="a" style="left:1166px;top:403.8px;width:671px;height:21.3px;background:#1b1a1e;"></div>
<div class="t" style="left:1172px;top:409.22px;font-size:11px;color:#000;">C</div>
<div class="t" style="left:1188.9px;top:408.25px;font-size:13px;color:#e8e3eb;transform:scaleX(0.99);transform-origin:left center;">logo-icon-mini.png</div>
<div class="t" style="left:1446px;top:408.25px;font-size:13px;color:#e8e3eb;">200</div>
<div class="t" style="left:1559.5px;top:408.25px;font-size:13px;color:#e8e3eb;">png</div>
<div class="t" style="left:1642.3px;top:408.25px;font-size:13px;color:#8d8791;">Other</div>
<div class="t" style="right:3px;top:408.25px;font-size:13px;color:#e8e3eb;">1.2</div>
<div class="a" style="left:1166px;top:424.9px;width:671px;height:21.3px;background:#222025;"></div>
<svg class="a" style="left:1171px;top:430.9px" width="14" height="12" viewBox="0 0 14 12"><path d="M3.6 0.8Q2 0.8 2 2.5V4.5Q2 6 0.6 6Q2 6 2 7.5V9.5Q2 11.2 3.6 11.2M10.4 0.8Q12 0.8 12 2.5V4.5Q12 6 13.4 6Q12 6 12 7.5V9.5Q12 11.2 10.4 11.2" stroke="#f0843f" stroke-width="1.4" fill="none"/><circle cx="7" cy="4" r="1" fill="#f0843f"/><path d="M7 6.8V8.8L6.2 9.8" stroke="#f0843f" stroke-width="1.4" fill="none"/></svg>
<div class="t" style="left:1188.9px;top:429.28px;font-size:13px;color:#e8e3eb;transform:scaleX(0.99);transform-origin:left center;">vendas-por-dia?loja=2</div>
<div class="t" style="left:1446px;top:429.28px;font-size:13px;color:#e8e3eb;">200</div>
<div class="t" style="left:1559.5px;top:429.28px;font-size:13px;color:#e8e3eb;">xhr</div>
<div class="t" style="left:1642.3px;top:429.28px;font-size:13px;color:#e8e3eb;text-decoration:underline;">app.js:279</div>
<div class="t" style="right:3px;top:429.28px;font-size:13px;color:#e8e3eb;">1.4</div>
<div class="a" style="left:1166px;top:445.9px;width:671px;height:21.3px;background:#1b1a1e;"></div>
<svg class="a" style="left:1171px;top:451.9px" width="14" height="12" viewBox="0 0 14 12"><path d="M3.6 0.8Q2 0.8 2 2.5V4.5Q2 6 0.6 6Q2 6 2 7.5V9.5Q2 11.2 3.6 11.2M10.4 0.8Q12 0.8 12 2.5V4.5Q12 6 13.4 6Q12 6 12 7.5V9.5Q12 11.2 10.4 11.2" stroke="#f0843f" stroke-width="1.4" fill="none"/><circle cx="7" cy="4" r="1" fill="#f0843f"/><path d="M7 6.8V8.8L6.2 9.8" stroke="#f0843f" stroke-width="1.4" fill="none"/></svg>
<div class="t" style="left:1188.9px;top:450.31px;font-size:13px;color:#e8e3eb;transform:scaleX(0.99);transform-origin:left center;">dashboard?loja=2&amp;mes=3</div>
<div class="t" style="left:1446px;top:450.31px;font-size:13px;color:#e8e3eb;">200</div>
<div class="t" style="left:1559.5px;top:450.31px;font-size:13px;color:#e8e3eb;">xhr</div>
<div class="t" style="left:1642.3px;top:450.31px;font-size:13px;color:#e8e3eb;text-decoration:underline;">app.js:279</div>
<div class="t" style="right:3px;top:450.31px;font-size:13px;color:#e8e3eb;">1.8</div>
<div class="a" style="left:1166px;top:466.9px;width:671px;height:21.3px;background:#222025;"></div>
<svg class="a" style="left:1171px;top:472.9px" width="14" height="12" viewBox="0 0 14 12"><path d="M3.6 0.8Q2 0.8 2 2.5V4.5Q2 6 0.6 6Q2 6 2 7.5V9.5Q2 11.2 3.6 11.2M10.4 0.8Q12 0.8 12 2.5V4.5Q12 6 13.4 6Q12 6 12 7.5V9.5Q12 11.2 10.4 11.2" stroke="#f0843f" stroke-width="1.4" fill="none"/><circle cx="7" cy="4" r="1" fill="#f0843f"/><path d="M7 6.8V8.8L6.2 9.8" stroke="#f0843f" stroke-width="1.4" fill="none"/></svg>
<div class="t" style="left:1188.9px;top:471.34px;font-size:13px;color:#e8e3eb;transform:scaleX(0.99);transform-origin:left center;">vendas-por-dia?loja=1&amp;mes=3</div>
<div class="t" style="left:1446px;top:471.34px;font-size:13px;color:#e8e3eb;">200</div>
<div class="t" style="left:1559.5px;top:471.34px;font-size:13px;color:#e8e3eb;">xhr</div>
<div class="t" style="left:1642.3px;top:471.34px;font-size:13px;color:#e8e3eb;text-decoration:underline;">app.js:279</div>
<div class="t" style="right:3px;top:471.34px;font-size:13px;color:#e8e3eb;">1.9</div>
<div class="a" style="left:1166px;top:487.9px;width:671px;height:21.3px;background:#1b1a1e;"></div>
<svg class="a" style="left:1171px;top:493.9px" width="14" height="12" viewBox="0 0 14 12"><path d="M3.6 0.8Q2 0.8 2 2.5V4.5Q2 6 0.6 6Q2 6 2 7.5V9.5Q2 11.2 3.6 11.2M10.4 0.8Q12 0.8 12 2.5V4.5Q12 6 13.4 6Q12 6 12 7.5V9.5Q12 11.2 10.4 11.2" stroke="#f0843f" stroke-width="1.4" fill="none"/><circle cx="7" cy="4" r="1" fill="#f0843f"/><path d="M7 6.8V8.8L6.2 9.8" stroke="#f0843f" stroke-width="1.4" fill="none"/></svg>
<div class="t" style="left:1188.9px;top:492.37px;font-size:13px;color:#e8e3eb;transform:scaleX(0.99);transform-origin:left center;">vendas-por-dia?loja=2&amp;mes=3</div>
<div class="t" style="left:1446px;top:492.37px;font-size:13px;color:#e8e3eb;">200</div>
<div class="t" style="left:1559.5px;top:492.37px;font-size:13px;color:#e8e3eb;">xhr</div>
<div class="t" style="left:1642.3px;top:492.37px;font-size:13px;color:#e8e3eb;text-decoration:underline;">app.js:279</div>
<div class="t" style="right:3px;top:492.37px;font-size:13px;color:#e8e3eb;">1.9</div>
<div class="a" style="left:1166px;top:508px;width:671px;height:1px;background:#4a4052;"></div>
<div class="a" style="left:1166px;top:509px;width:671px;height:27px;background:#232025;"></div>
<div class="t" style="left:1176.6px;top:517.33px;font-size:13px;color:#e3dde6;transform:scaleX(0.95);transform-origin:left center;">31 requests</div>
<div class="t" style="left:1260.7px;top:517.33px;font-size:13px;color:#e3dde6;transform:scaleX(0.96);transform-origin:left center;">1.2 MB transferred</div>
<div class="t" style="left:1383.7px;top:517.33px;font-size:13px;color:#e3dde6;transform:scaleX(0.949);transform-origin:left center;">7.2 MB resources</div>
<div class="t" style="left:1499.9px;top:517.33px;font-size:13px;color:#e3dde6;transform:scaleX(0.953);transform-origin:left center;">Finish: 19.49 s</div>
<div class="t" style="left:1599.8px;top:517.33px;font-size:13px;color:#7fb0f7;transform:scaleX(0.962);transform-origin:left center;">DOMContentLoaded: 1.94 s</div>
<div class="t" style="left:1774.7px;top:517.33px;font-size:13px;color:#f5998a;transform:scaleX(0.96);transform-origin:left center;">Load: 2.13 s</div>
<div class="a" style="left:1251px;top:516px;width:1px;height:15px;background:#4a4052;"></div>
<div class="a" style="left:1374px;top:516px;width:1px;height:15px;background:#4a4052;"></div>
<div class="a" style="left:1490px;top:516px;width:1px;height:15px;background:#4a4052;"></div>
<div class="a" style="left:1590px;top:516px;width:1px;height:15px;background:#4a4052;"></div>
<div class="a" style="left:1766px;top:516px;width:1px;height:15px;background:#4a4052;"></div>
<div class="a" style="left:1166px;top:535px;width:671px;height:1px;background:#4a4052;"></div>
<div class="a" style="left:1166px;top:536px;width:671px;height:28px;background:#3a3043;"></div>
<div class="a" style="left:1166px;top:564px;width:671px;height:1px;background:#4a4052;"></div>
<div class="a" style="left:1166px;top:565px;width:671px;height:440px;background:#353238;"></div>
<svg class="a" style="left:1180px;top:543px" width="4" height="14" viewBox="0 0 4 14"><g fill="#cdc6d2"><circle cx="2" cy="2" r="1.5"/><circle cx="2" cy="7" r="1.5"/><circle cx="2" cy="12" r="1.5"/></g></svg>
<div class="t" style="left:1204.2px;top:544.03px;font-size:13px;color:#e3dde6;transform:scaleX(0.975);transform-origin:left center;">Console</div>
<div class="t" style="left:1271.3px;top:544.03px;font-size:13px;color:#e3dde6;transform:scaleX(0.983);transform-origin:left center;">AI assistance</div>
<svg class="a" style="left:1351px;top:544px" width="11" height="12" viewBox="0 0 11 12"><path d="M3.5 0.7H7.5M4.3 0.7V4.5L0.8 11.3H10.2L6.7 4.5V0.7M2.3 8.3H8.7" stroke="#cdc6d2" stroke-width="1.2" fill="none"/></svg>
<div class="t" style="left:1396.3px;top:544.03px;font-size:13px;color:#e3dde6;transform:scaleX(0.95);transform-origin:left center;">Issues</div>
<div class="t" style="left:1463.4px;top:544.03px;font-size:13px;color:#d6a9f8;transform:scaleX(0.99);transform-origin:left center;">What's new</div>
<svg class="a" style="left:1535px;top:546px" width="9" height="9" viewBox="0 0 9 9"><path d="M0.7 0.7L8.3 8.3M8.3 0.7L0.7 8.3" stroke="#d6a9f8" stroke-width="1.3"/></svg>
<div class="a" style="left:1453px;top:561px;width:98px;height:3px;background:#d3a5f5;border-radius:2px 2px 0 0"></div>
<svg class="a" style="left:1269px;top:580px" width="32" height="32" viewBox="0 0 32 32"><circle cx="16" cy="16" r="15.8" fill="#1b64dc"/><circle cx="16" cy="16" r="12.8" fill="none" stroke="#fff" stroke-width="1.3"/><circle cx="16" cy="16" r="5.4" fill="none" stroke="#fff" stroke-width="1.3"/><path d="M16 10.6H28.2M11.3 18.7L5.3 8.1M20.6 18.8L14.6 28.6" stroke="#fff" stroke-width="1.3"/></svg>
<div class="t" style="left:1310.7px;top:588.25px;font-size:16.7px;color:#ede8f0;font-weight:bold;transform:scaleX(0.93);transform-origin:left center;">What's new in DevTools 135</div>
<div class="a" style="left:1269px;top:628px;width:134px;height:24px;border-radius:12px;background:#d9aaf8"></div>
<div class="t" style="left:1281.8px;top:633.08px;font-size:12.7px;color:#2b1a3c;transform:scaleX(0.94);transform-origin:left center;">See all new features</div>
<div class="a" style="left:1249px;top:672px;width:576px;height:360px;border-radius:20px;background:#1d1b1f"></div>
<div class="a" style="left:1269px;top:692px;width:329px;height:71px;border-radius:14px;background:#2e2a33;overflow:hidden"><div class="a" style="left:0;top:0;width:117px;height:71px;background:#1c69e3"></div></div>
<svg class="a" style="left:1269px;top:692px" width="117" height="71" viewBox="0 0 117 71"><defs><clipPath id="thc"><path d="M14 0H117V71H14A14 14 0 0 1 0 57V14A14 14 0 0 1 14 0Z"/></clipPath><radialGradient id="glw"><stop offset="0" stop-color="rgba(255,255,255,0.35)"/><stop offset="1" stop-color="rgba(255,255,255,0)"/></radialGradient></defs><g clip-path="url(#thc)"><g stroke="rgba(255,255,255,0.22)" stroke-width="0.8" fill="none"><path d="M7 0V71M28.2 0V71M49.3 0V71M0 8H117M0 29H117M0 50.5H117M0 0L60 60M60 0L0 60"/><circle cx="28.2" cy="29" r="28"/></g><g stroke="rgba(255,255,255,0.95)" stroke-width="1.1" fill="none"><circle cx="28.2" cy="29" r="15.7"/><circle cx="28.2" cy="29" r="20.7"/><circle cx="35" cy="36" r="35.5"/><path d="M28.2 8.3H63M43 43.5L29 71"/></g><circle cx="62" cy="36" r="22" fill="url(#glw)"/></g><path d="M48 27Q48 19.5 55 23L71.5 31.5Q78 35.8 71.5 40L55 48.5Q48 52 48 44.5Z" fill="#eef2fb"/><rect x="79.2" y="12" width="29.7" height="15.8" rx="3.5" fill="#e7edfb"/></svg>
<div class="t" style="left:1352.3px;top:706.86px;font-size:11.5px;color:#1b5fd6;font-weight:bold;transform:scaleX(0.96);transform-origin:left center;">new</div>
<div class="t" style="left:1397.7px;top:706.32px;font-size:12px;color:#ebe6ee;transform:scaleX(0.98);transform-origin:left center;">See the highlights from Chrome 135</div>
<div class="a" style="left:1269px;top:784px;width:536px;height:98px;border-radius:15px;background:#2e2a33"></div>
<div class="a" style="left:1269px;top:902px;width:536px;height:98px;border-radius:15px;background:#2e2a33"></div>
<div class="t" style="left:1284.5px;top:800.16px;font-size:14.4px;color:#d6a9f8;font-weight:bold;transform:scaleX(0.995);transform-origin:left center;text-decoration:underline;">Origin and script links for profile and function calls in Performance</div>
<div class="t" style="left:1284.5px;top:833.45px;font-size:12.75px;color:#e3dee6;">The Performance &gt; Summary tab now shows links to the relevant scripts and origins for</div>
<div class="t" style="left:1284.5px;top:851.25px;font-size:12.75px;color:#e3dee6;transform:scaleX(1.02);transform-origin:left center;">profile and function calls.</div>
<div class="t" style="left:1284.5px;top:918.16px;font-size:14.4px;color:#d6a9f8;font-weight:bold;text-decoration:underline;">Improved empty states for various panels</div>
<div class="t" style="left:1284.5px;top:951.45px;font-size:12.75px;color:#e3dee6;">Empty states (when nothing is open) for many panels, tabs, and sections are updated to</div>
<div class="t" style="left:1284.5px;top:969.35px;font-size:12.75px;color:#e3dee6;transform:scaleX(1.02);transform-origin:left center;">let you know what to do to start working with them.</div>
</body></html>
